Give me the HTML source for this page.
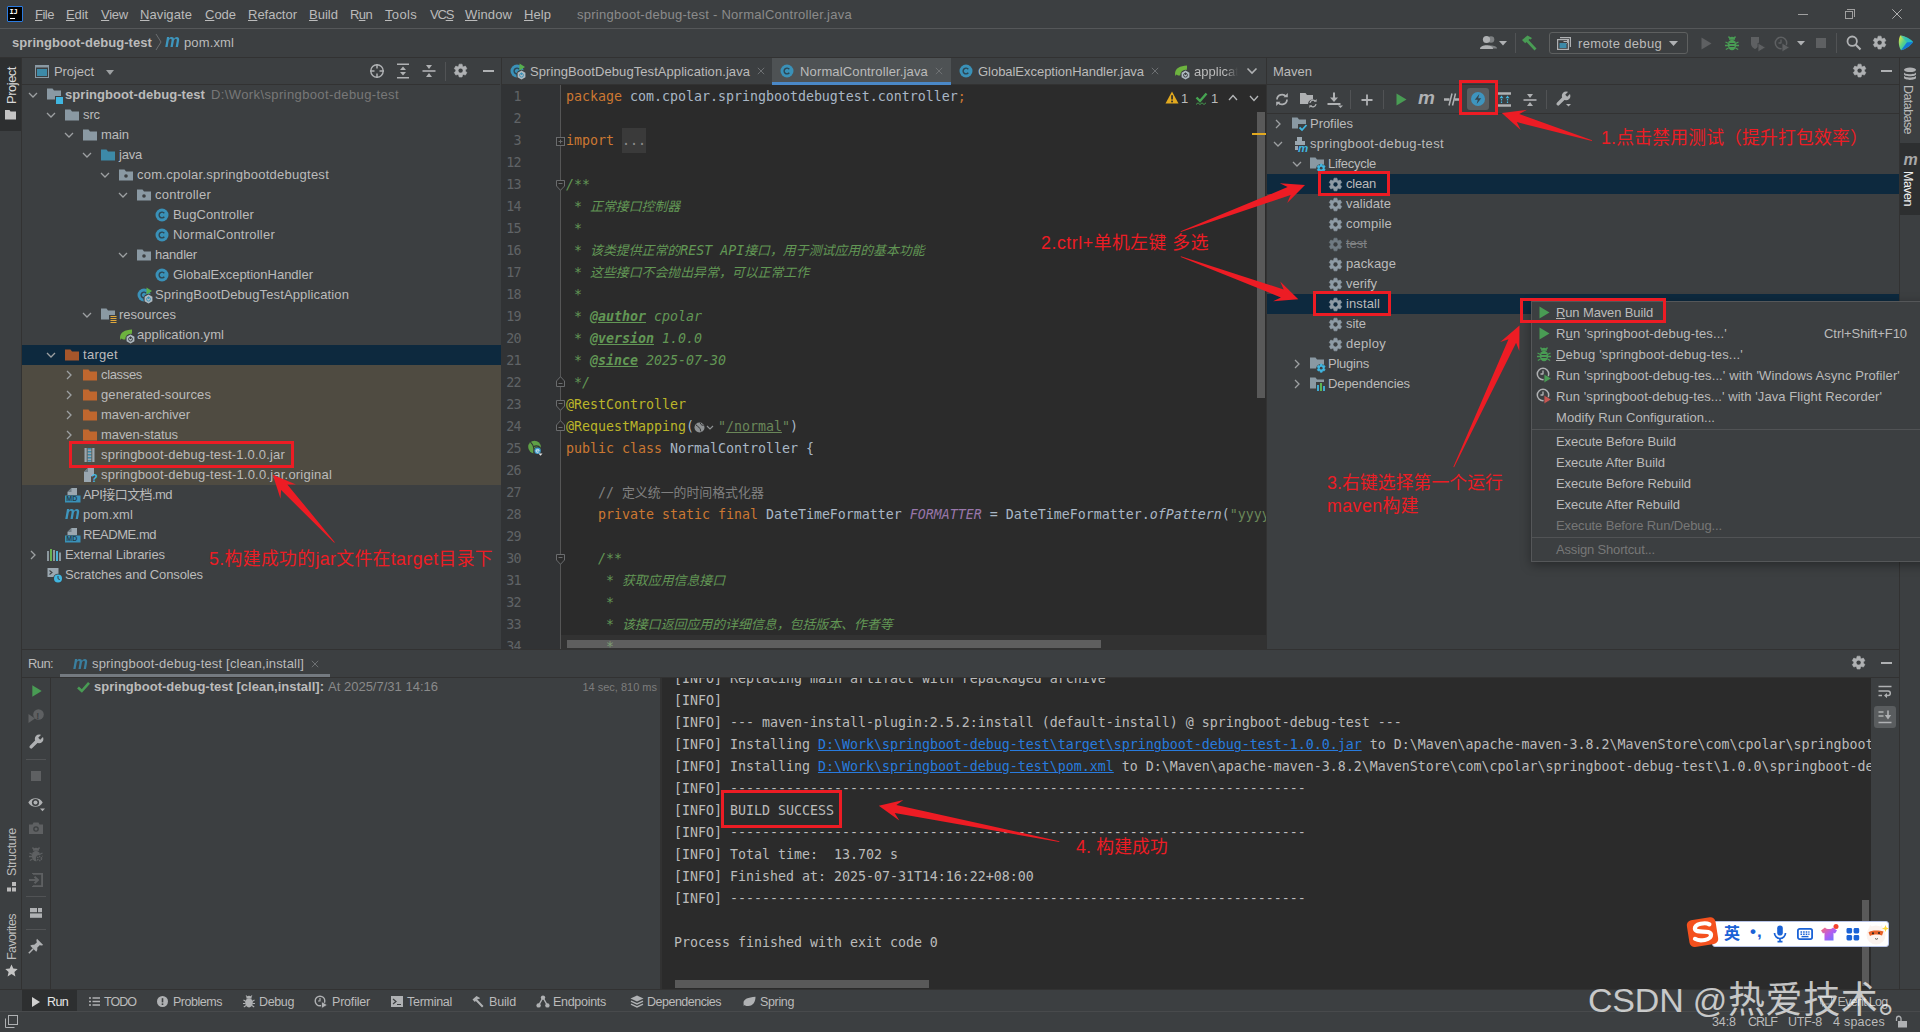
<!DOCTYPE html>
<html lang="zh"><head><meta charset="utf-8"><title>springboot-debug-test - NormalController.java</title>
<style>
html,body{margin:0;padding:0;background:#3c3f41;}
body{width:1920px;height:1032px;position:relative;overflow:hidden;font-family:"Liberation Sans","Noto Sans CJK SC",sans-serif;font-size:13px;color:#bbbbbb;}
#root{position:absolute;left:0;top:0;width:1920px;height:1032px;overflow:hidden;}
#root div,#root svg,#root span.t{position:absolute;}
span.t{white-space:pre;}
u{text-decoration:underline;text-underline-offset:1px;}
</style></head><body><div id="root">
<div style="left:0px;top:0px;width:1920px;height:1032px;background:#3c3f41;"></div>
<div style="left:0px;top:28px;width:1920px;height:1px;background:#555759;"></div>
<div style="left:7px;top:6px;width:16px;height:16px;background:#000000;border:1px solid #2c7be0;box-sizing:border-box;border-radius:1px;"></div>
<span class="t" style="top:8px;line-height:8px;font-size:7px;color:#fff;left:9.5px;font-weight:bold;font-family:'DejaVu Sans Mono','Noto Sans CJK SC',monospace;letter-spacing:-0.3px;">IJ</span>
<div style="left:10px;top:17.5px;width:5px;height:1.2px;background:#fff;"></div>
<span class="t" style="top:5px;line-height:20px;font-size:13px;color:#bbbbbb;left:35px;letter-spacing:-0.492px;"><u>F</u>ile</span>
<span class="t" style="top:5px;line-height:20px;font-size:13px;color:#bbbbbb;left:66px;letter-spacing:-0.102px;"><u>E</u>dit</span>
<span class="t" style="top:5px;line-height:20px;font-size:13px;color:#bbbbbb;left:101px;letter-spacing:-0.238px;"><u>V</u>iew</span>
<span class="t" style="top:5px;line-height:20px;font-size:13px;color:#bbbbbb;left:140px;letter-spacing:0.086px;"><u>N</u>avigate</span>
<span class="t" style="top:5px;line-height:20px;font-size:13px;color:#bbbbbb;left:205px;letter-spacing:-0.023px;"><u>C</u>ode</span>
<span class="t" style="top:5px;line-height:20px;font-size:13px;color:#bbbbbb;left:248px;letter-spacing:-0.018px;"><u>R</u>efactor</span>
<span class="t" style="top:5px;line-height:20px;font-size:13px;color:#bbbbbb;left:309px;letter-spacing:0.016px;"><u>B</u>uild</span>
<span class="t" style="top:5px;line-height:20px;font-size:13px;color:#bbbbbb;left:350px;letter-spacing:-0.620px;">R<u>u</u>n</span>
<span class="t" style="top:5px;line-height:20px;font-size:13px;color:#bbbbbb;left:385px;letter-spacing:0.328px;"><u>T</u>ools</span>
<span class="t" style="top:5px;line-height:20px;font-size:13px;color:#bbbbbb;left:430px;letter-spacing:-1.200px;">VC<u>S</u></span>
<span class="t" style="top:5px;line-height:20px;font-size:13px;color:#bbbbbb;left:465px;letter-spacing:0.125px;"><u>W</u>indow</span>
<span class="t" style="top:5px;line-height:20px;font-size:13px;color:#bbbbbb;left:524px;letter-spacing:0.062px;"><u>H</u>elp</span>
<span class="t" style="top:4.5px;line-height:20px;font-size:13px;color:#8b8b8b;left:577px;letter-spacing:0.266px;">springboot-debug-test - NormalController.java</span>
<div style="left:1798px;top:14px;width:10px;height:1px;background:#a0a0a0;"></div>
<div style="left:1845px;top:11px;width:8px;height:8px;border:1px solid #a0a0a0;box-sizing:border-box;"></div>
<div style="left:1847px;top:9px;width:8px;height:8px;border-top:1px solid #a0a0a0;border-right:1px solid #a0a0a0;box-sizing:border-box;"></div>
<svg style="left:1892px;top:9px;" width="10" height="10" viewBox="0 0 10 10"><path d="M0.3 0.3L9.7 9.7M9.7 0.3L0.3 9.7" stroke="#b0b0b0" stroke-width="1" fill="none"/></svg>
<div style="left:0px;top:57px;width:1920px;height:1px;background:#323232;"></div>
<span class="t" style="top:33px;line-height:20px;font-size:13px;color:#bbbbbb;left:12px;font-weight:bold;letter-spacing:0.064px;">springboot-debug-test</span>
<svg style="left:154px;top:33px;" width="10" height="18" viewBox="0 0 10 18"><path d="M2 1L7 9L2 17" stroke="#6b6e70" stroke-width="1" fill="none"/></svg>
<span class="t" style="top:32.2px;line-height:18px;font-size:19px;color:#3e96be;left:164.5px;font-weight:bold;font-style:italic;transform-origin:0 50%;transform:scaleX(0.88);">m</span>
<span class="t" style="top:33px;line-height:20px;font-size:13px;color:#bbbbbb;left:184px;letter-spacing:0.125px;">pom.xml</span>
<div style="left:0px;top:58px;width:21px;height:954px;background:#3c3f41;"></div>
<div style="left:21px;top:58px;width:1px;height:954px;background:#323232;"></div>
<div style="left:0px;top:58px;width:21px;height:73px;background:#2d2f30;"></div>
<span class="t" style="top:-7px;line-height:14px;font-size:13px;color:#d8d8d8;left:0px;letter-spacing:-0.496px;left:5px;top:67px;transform-origin:0 0;transform:rotate(-90deg) translate(-100%,0);">Project</span>
<svg style="left:5px;top:110px;" width="12" height="10" viewBox="0 0 12 10"><path d="M0 0H4.5L5.5 1.5H11V9.5H0Z" fill="#c4c4c4"/></svg>
<span class="t" style="top:-7px;line-height:14px;font-size:12.5px;color:#bbbbbb;left:0px;letter-spacing:-0.302px;left:5px;top:828px;transform-origin:0 0;transform:rotate(-90deg) translate(-100%,0);">Structure</span>
<svg style="left:7px;top:882px;" width="11" height="10" viewBox="0 0 11 10"><rect x="5" y="0" width="4" height="4" fill="#bbb"/><rect x="0" y="5.5" width="4" height="4" fill="#bbb"/><rect x="5" y="5.5" width="4" height="4" fill="#bbb"/></svg>
<span class="t" style="top:-7px;line-height:14px;font-size:12.5px;color:#bbbbbb;left:0px;letter-spacing:-0.601px;left:5px;top:914px;transform-origin:0 0;transform:rotate(-90deg) translate(-100%,0);">Favorites</span>
<svg style="left:5px;top:964px;" width="13" height="13" viewBox="0 0 13 13"><path d="M6.5 0.5L8.3 4.6L12.7 5L9.4 8L10.4 12.4L6.5 10.1L2.6 12.4L3.6 8L0.3 5L4.7 4.6Z" fill="#c4c4c4"/></svg>
<div style="left:22px;top:84px;width:478px;height:1px;background:#323232;"></div>
<div style="left:501px;top:58px;width:1px;height:592px;background:#323232;"></div>
<svg style="left:35px;top:65px;" width="15" height="14" viewBox="0 0 15 14"><rect x="0.5" y="0.5" width="13" height="12" fill="none" stroke="#8a99a3" stroke-width="1"/><rect x="2" y="4" width="10" height="7" fill="#3d8aa8"/><rect x="0.5" y="0.5" width="13" height="2" fill="#8a99a3"/></svg>
<span class="t" style="top:61.5px;line-height:20px;font-size:13px;color:#bbbbbb;left:54px;letter-spacing:-0.067px;">Project</span>
<svg style="left:106px;top:70px;" width="9" height="6" viewBox="0 0 9 6"><path d="M0 0H8L4 5Z" fill="#9da0a2"/></svg>
<svg style="left:369px;top:63px;" width="16" height="16" viewBox="0 0 16 16"><circle cx="8" cy="8" r="6.2" fill="none" stroke="#afb1b3" stroke-width="1.4"/><path d="M8 1V5.5M8 10.5V15M1 8H5.5M10.5 8H15" stroke="#afb1b3" stroke-width="1.5"/></svg>
<svg style="left:396px;top:63px;" width="14" height="16" viewBox="0 0 14 16"><path d="M1 1.2H13M1 14.8H13" stroke="#afb1b3" stroke-width="1.6"/><path d="M7 3.5L10 7H4ZM7 12.5L10 9H4Z" fill="#afb1b3"/></svg>
<svg style="left:422px;top:63px;" width="14" height="16" viewBox="0 0 14 16"><path d="M0.5 8H13.5" stroke="#afb1b3" stroke-width="1.6"/><path d="M7 6L10 2H4ZM7 10L10 14H4Z" fill="#afb1b3"/></svg>
<div style="left:445px;top:62px;width:1px;height:19px;background:#515355;"></div>
<svg style="left:453.4px;top:63.400000000000006px;" width="15.2" height="15.2" viewBox="0 0 15.2 15.2"><path d="M5.67 3.26L6.12 1.17L9.08 1.17L9.53 3.26L10.39 3.76L12.43 3.10L13.91 5.67L12.33 7.10L12.33 8.10L13.91 9.53L12.43 12.10L10.39 11.44L9.53 11.94L9.08 14.03L6.12 14.03L5.67 11.94L4.81 11.44L2.77 12.10L1.29 9.53L2.87 8.10L2.87 7.10L1.29 5.67L2.77 3.10L4.81 3.76Z" fill="#afb1b3" stroke="#afb1b3" stroke-width="0.6" stroke-linejoin="round"/><circle cx="7.6" cy="7.6" r="2.18" fill="#3c3f41"/></svg>
<div style="left:482.5px;top:70px;width:11px;height:2px;background:#afb1b3;"></div>
<div style="left:22px;top:345px;width:479px;height:20px;background:#0d293e;"></div>
<div style="left:22px;top:365px;width:479px;height:120px;background:#4f4b41;"></div>
<svg style="left:28px;top:90.5px;" width="10" height="8" viewBox="0 0 10 8"><path d="M1 2L5 6L9 2" stroke="#9da0a2" stroke-width="1.3" fill="none"/></svg>
<svg style="left:47px;top:87.5px;" width="15" height="12" viewBox="0 0 15 12"><path d="M0 0.5H5.5L7 2.5H14V11.5H0Z" fill="#8a99a3"/></svg>
<div style="left:55px;top:95.5px;width:7px;height:7px;background:#40b6e0;border:1px solid #3c3f41;"></div>
<span class="t" style="top:84.5px;line-height:20px;font-size:13px;color:#bbbbbb;left:65px;font-weight:bold;letter-spacing:0.064px;">springboot-debug-test</span>
<svg style="left:46px;top:110.5px;" width="10" height="8" viewBox="0 0 10 8"><path d="M1 2L5 6L9 2" stroke="#9da0a2" stroke-width="1.3" fill="none"/></svg>
<svg style="left:65px;top:108.5px;" width="15" height="12" viewBox="0 0 15 12"><path d="M0 0.5H5.5L7 2.5H14V11.5H0Z" fill="#8a99a3"/></svg>
<span class="t" style="top:104.5px;line-height:20px;font-size:13px;color:#bbbbbb;left:83px;letter-spacing:-0.115px;">src</span>
<svg style="left:64px;top:130.5px;" width="10" height="8" viewBox="0 0 10 8"><path d="M1 2L5 6L9 2" stroke="#9da0a2" stroke-width="1.3" fill="none"/></svg>
<svg style="left:83px;top:128.5px;" width="15" height="12" viewBox="0 0 15 12"><path d="M0 0.5H5.5L7 2.5H14V11.5H0Z" fill="#8a99a3"/></svg>
<span class="t" style="top:124.5px;line-height:20px;font-size:13px;color:#bbbbbb;left:101px;letter-spacing:-0.047px;">main</span>
<svg style="left:82px;top:150.5px;" width="10" height="8" viewBox="0 0 10 8"><path d="M1 2L5 6L9 2" stroke="#9da0a2" stroke-width="1.3" fill="none"/></svg>
<svg style="left:101px;top:148.5px;" width="15" height="12" viewBox="0 0 15 12"><path d="M0 0.5H5.5L7 2.5H14V11.5H0Z" fill="#3d8aa8"/></svg>
<span class="t" style="top:144.5px;line-height:20px;font-size:13px;color:#bbbbbb;left:119px;letter-spacing:-0.215px;">java</span>
<svg style="left:100px;top:170.5px;" width="10" height="8" viewBox="0 0 10 8"><path d="M1 2L5 6L9 2" stroke="#9da0a2" stroke-width="1.3" fill="none"/></svg>
<svg style="left:119px;top:168.5px;" width="15" height="12" viewBox="0 0 15 12"><path d="M0 0.5H5.5L7 2.5H14V11.5H0Z" fill="#8a99a3"/><circle cx="7" cy="7" r="1.8" fill="#3c3f41"/></svg>
<span class="t" style="top:164.5px;line-height:20px;font-size:13px;color:#bbbbbb;left:137px;letter-spacing:0.257px;">com.cpolar.springbootdebugtest</span>
<svg style="left:118px;top:190.5px;" width="10" height="8" viewBox="0 0 10 8"><path d="M1 2L5 6L9 2" stroke="#9da0a2" stroke-width="1.3" fill="none"/></svg>
<svg style="left:137px;top:188.5px;" width="15" height="12" viewBox="0 0 15 12"><path d="M0 0.5H5.5L7 2.5H14V11.5H0Z" fill="#8a99a3"/><circle cx="7" cy="7" r="1.8" fill="#3c3f41"/></svg>
<span class="t" style="top:184.5px;line-height:20px;font-size:13px;color:#bbbbbb;left:155px;letter-spacing:0.253px;">controller</span>
<svg style="left:155px;top:207.5px;" width="14" height="14" viewBox="0 0 14 14"><circle cx="7" cy="7" r="6.5" fill="#3a91b8"/><path d="M9.3 5.2A2.9 2.9 0 1 0 9.3 8.8" stroke="#2d4552" stroke-width="1.4" fill="none"/></svg>
<span class="t" style="top:204.5px;line-height:20px;font-size:13px;color:#bbbbbb;left:173px;letter-spacing:0.115px;">BugController</span>
<svg style="left:155px;top:227.5px;" width="14" height="14" viewBox="0 0 14 14"><circle cx="7" cy="7" r="6.5" fill="#3a91b8"/><path d="M9.3 5.2A2.9 2.9 0 1 0 9.3 8.8" stroke="#2d4552" stroke-width="1.4" fill="none"/></svg>
<span class="t" style="top:224.5px;line-height:20px;font-size:13px;color:#bbbbbb;left:173px;letter-spacing:0.234px;">NormalController</span>
<svg style="left:118px;top:250.5px;" width="10" height="8" viewBox="0 0 10 8"><path d="M1 2L5 6L9 2" stroke="#9da0a2" stroke-width="1.3" fill="none"/></svg>
<svg style="left:137px;top:248.5px;" width="15" height="12" viewBox="0 0 15 12"><path d="M0 0.5H5.5L7 2.5H14V11.5H0Z" fill="#8a99a3"/><circle cx="7" cy="7" r="1.8" fill="#3c3f41"/></svg>
<span class="t" style="top:244.5px;line-height:20px;font-size:13px;color:#bbbbbb;left:155px;letter-spacing:-0.196px;">handler</span>
<svg style="left:155px;top:267.5px;" width="14" height="14" viewBox="0 0 14 14"><circle cx="7" cy="7" r="6.5" fill="#3a91b8"/><path d="M9.3 5.2A2.9 2.9 0 1 0 9.3 8.8" stroke="#2d4552" stroke-width="1.4" fill="none"/></svg>
<span class="t" style="top:264.5px;line-height:20px;font-size:13px;color:#bbbbbb;left:173px;letter-spacing:-0.009px;">GlobalExceptionHandler</span>
<svg style="left:137px;top:286.5px;" width="17" height="17" viewBox="0 0 17 17"><circle cx="7" cy="8" r="6.5" fill="#3a91b8"/><path d="M9.3 6.2A2.9 2.9 0 1 0 9.3 9.8" stroke="#2d4552" stroke-width="1.4" fill="none"/><path d="M9.5 0.5L15 4L9.5 7.5Z" fill="#57b04f"/><circle cx="11.5" cy="12" r="5.2" fill="#3c3f41"/><path d="M11.5 7.5L15.4 9.7V14.3L11.5 16.5L7.6 14.3V9.7Z" fill="#aeb9c0"/><circle cx="11.5" cy="12.2" r="1.9" fill="none" stroke="#3a91b8" stroke-width="1"/><path d="M11.5 9.6V12" stroke="#3a91b8" stroke-width="1"/></svg>
<span class="t" style="top:284.5px;line-height:20px;font-size:13px;color:#bbbbbb;left:155px;letter-spacing:0.131px;">SpringBootDebugTestApplication</span>
<svg style="left:82px;top:310.5px;" width="10" height="8" viewBox="0 0 10 8"><path d="M1 2L5 6L9 2" stroke="#9da0a2" stroke-width="1.3" fill="none"/></svg>
<svg style="left:101px;top:307.5px;" width="15" height="12" viewBox="0 0 15 12"><path d="M0 0.5H5.5L7 2.5H14V11.5H0Z" fill="#8a99a3"/></svg>
<svg style="left:109px;top:314.5px;" width="8" height="8" viewBox="0 0 8 8"><rect x="0" y="0" width="8" height="8" fill="#3c3f41"/><path d="M1.5 1.5H7.5M1.5 3.5H7.5M1.5 5.5H7.5M1.5 7.5H7.5" stroke="#e0a83c" stroke-width="1"/></svg>
<span class="t" style="top:304.5px;line-height:20px;font-size:13px;color:#bbbbbb;left:119px;letter-spacing:-0.009px;">resources</span>
<svg style="left:119px;top:326.5px;" width="17" height="17" viewBox="0 0 17 17"><path d="M1 11C1 5 6 3 13 2.5C13.5 8 11 13 5 12.5C4 12.5 3 12 2.5 11.5L1.5 13Z" fill="#6db33f"/><circle cx="11.5" cy="12" r="5.2" fill="#3c3f41"/><path d="M11.5 7.5L15.4 9.7V14.3L11.5 16.5L7.6 14.3V9.7Z" fill="#aeb9c0"/><circle cx="11.5" cy="12.2" r="1.9" fill="none" stroke="#3c3f41" stroke-width="1"/><path d="M11.5 9.6V12" stroke="#3c3f41" stroke-width="1"/></svg>
<span class="t" style="top:324.5px;line-height:20px;font-size:13px;color:#bbbbbb;left:137px;letter-spacing:0.067px;">application.yml</span>
<svg style="left:46px;top:350.5px;" width="10" height="8" viewBox="0 0 10 8"><path d="M1 2L5 6L9 2" stroke="#9da0a2" stroke-width="1.3" fill="none"/></svg>
<svg style="left:65px;top:348.5px;" width="15" height="12" viewBox="0 0 15 12"><path d="M0 0.5H5.5L7 2.5H14V11.5H0Z" fill="#a5562b"/></svg>
<span class="t" style="top:344.5px;line-height:20px;font-size:13px;color:#bbbbbb;left:83px;letter-spacing:0.292px;">target</span>
<svg style="left:65px;top:369.5px;" width="8" height="10" viewBox="0 0 8 10"><path d="M2 1L6 5L2 9" stroke="#9da0a2" stroke-width="1.3" fill="none"/></svg>
<svg style="left:83px;top:368.5px;" width="15" height="12" viewBox="0 0 15 12"><path d="M0 0.5H5.5L7 2.5H14V11.5H0Z" fill="#c0672e"/></svg>
<span class="t" style="top:364.5px;line-height:20px;font-size:13px;color:#bbbbbb;left:101px;letter-spacing:-0.337px;">classes</span>
<svg style="left:65px;top:389.5px;" width="8" height="10" viewBox="0 0 8 10"><path d="M2 1L6 5L2 9" stroke="#9da0a2" stroke-width="1.3" fill="none"/></svg>
<svg style="left:83px;top:388.5px;" width="15" height="12" viewBox="0 0 15 12"><path d="M0 0.5H5.5L7 2.5H14V11.5H0Z" fill="#c0672e"/></svg>
<span class="t" style="top:384.5px;line-height:20px;font-size:13px;color:#bbbbbb;left:101px;letter-spacing:0.094px;">generated-sources</span>
<svg style="left:65px;top:409.5px;" width="8" height="10" viewBox="0 0 8 10"><path d="M2 1L6 5L2 9" stroke="#9da0a2" stroke-width="1.3" fill="none"/></svg>
<svg style="left:83px;top:408.5px;" width="15" height="12" viewBox="0 0 15 12"><path d="M0 0.5H5.5L7 2.5H14V11.5H0Z" fill="#c0672e"/></svg>
<span class="t" style="top:404.5px;line-height:20px;font-size:13px;color:#bbbbbb;left:101px;letter-spacing:-0.042px;">maven-archiver</span>
<svg style="left:65px;top:429.5px;" width="8" height="10" viewBox="0 0 8 10"><path d="M2 1L6 5L2 9" stroke="#9da0a2" stroke-width="1.3" fill="none"/></svg>
<svg style="left:83px;top:428.5px;" width="15" height="12" viewBox="0 0 15 12"><path d="M0 0.5H5.5L7 2.5H14V11.5H0Z" fill="#c0672e"/></svg>
<span class="t" style="top:424.5px;line-height:20px;font-size:13px;color:#bbbbbb;left:101px;letter-spacing:-0.087px;">maven-status</span>
<svg style="left:83px;top:447.5px;" width="13" height="14" viewBox="0 0 13 14"><rect x="1.5" y="0" width="10" height="14" fill="#9aa7b0"/><path d="M6.5 0V14" stroke="#3d8aa8" stroke-width="4" stroke-dasharray="1.5 1.5"/><path d="M4.2 0V14M8.8 0V14" stroke="#4f4b41" stroke-width="0.8"/></svg>
<span class="t" style="top:444.5px;line-height:20px;font-size:13px;color:#bbbbbb;left:101px;letter-spacing:0.201px;">springboot-debug-test-1.0.0.jar</span>
<svg style="left:83px;top:466.5px;" width="16" height="16" viewBox="0 0 16 16"><path d="M5 1H11V9H8V15H1V5Z" fill="#9aa7b0"/><path d="M1 5H5V1Z" fill="#6f7d86"/></svg>
<span class="t" style="top:471.5px;line-height:12px;font-size:11px;color:#40b6e0;left:91px;font-weight:bold;">?</span>
<span class="t" style="top:464.5px;line-height:20px;font-size:13px;color:#bbbbbb;left:101px;letter-spacing:0.210px;">springboot-debug-test-1.0.0.jar.original</span>
<svg style="left:65px;top:486.5px;" width="16" height="16" viewBox="0 0 16 16"><path d="M6.5 1H12V8H2.5V5Z" fill="#9aa7b0"/><path d="M2.5 5H6.5V1Z" fill="#6f7d86"/><rect x="0" y="8.5" width="15.5" height="7" fill="#3a91b8"/></svg>
<span class="t" style="top:495.3px;line-height:7px;font-size:7px;color:#24404f;left:66.2px;font-weight:bold;letter-spacing:0.3px;">MD</span>
<span class="t" style="top:484.5px;line-height:20px;font-size:13px;color:#bbbbbb;left:83px;letter-spacing:-0.562px;">API接口文档.md</span>
<span class="t" style="top:504.2px;line-height:18px;font-size:19px;color:#3e96be;left:64.5px;font-weight:bold;font-style:italic;transform-origin:0 50%;transform:scaleX(0.88);">m</span>
<span class="t" style="top:504.5px;line-height:20px;font-size:13px;color:#bbbbbb;left:83px;letter-spacing:0.125px;">pom.xml</span>
<svg style="left:65px;top:526.5px;" width="16" height="16" viewBox="0 0 16 16"><path d="M6.5 1H12V8H2.5V5Z" fill="#9aa7b0"/><path d="M2.5 5H6.5V1Z" fill="#6f7d86"/><rect x="0" y="8.5" width="15.5" height="7" fill="#3a91b8"/></svg>
<span class="t" style="top:535.3px;line-height:7px;font-size:7px;color:#24404f;left:66.2px;font-weight:bold;letter-spacing:0.3px;">MD</span>
<span class="t" style="top:524.5px;line-height:20px;font-size:13px;color:#bbbbbb;left:83px;letter-spacing:-0.477px;">README.md</span>
<svg style="left:29px;top:549.5px;" width="8" height="10" viewBox="0 0 8 10"><path d="M2 1L6 5L2 9" stroke="#9da0a2" stroke-width="1.3" fill="none"/></svg>
<svg style="left:47px;top:548.5px;" width="15" height="12" viewBox="0 0 15 12"><path d="M1 2V12M4 0V12M7 1V12M10 2V12M13 3.5V12" stroke="#9aa7b0" stroke-width="1.7"/><path d="M4 0V12" stroke="#62b543" stroke-width="1.7"/><path d="M10 2V12" stroke="#40b6e0" stroke-width="1.7"/></svg>
<span class="t" style="top:544.5px;line-height:20px;font-size:13px;color:#bbbbbb;left:65px;letter-spacing:-0.064px;">External Libraries</span>
<svg style="left:47px;top:566.5px;" width="17" height="17" viewBox="0 0 17 17"><rect x="0.5" y="1" width="11" height="9" fill="#9aa7b0"/><path d="M2.5 3.5L5 5.5L2.5 7.5" stroke="#3c3f41" stroke-width="1.1" fill="none"/><circle cx="11" cy="11.5" r="4.8" fill="#3c3f41"/><circle cx="11" cy="11.5" r="4" fill="#40b6e0"/><path d="M11 9V11.7L12.8 12.6" stroke="#3c3f41" stroke-width="1" fill="none"/></svg>
<span class="t" style="top:564.5px;line-height:20px;font-size:13px;color:#bbbbbb;left:65px;letter-spacing:-0.133px;">Scratches and Consoles</span>
<span class="t" style="top:84.5px;line-height:20px;font-size:13px;color:#787878;left:211px;letter-spacing:0.386px;">D:\Work\springboot-debug-test</span>
<div style="left:501px;top:84px;width:766px;height:1px;background:#323232;"></div>
<div style="left:772px;top:58px;width:179px;height:27px;background:#4e5254;"></div>
<div style="left:772px;top:82px;width:179px;height:3px;background:#4a88c7;"></div>
<svg style="left:510px;top:63px;" width="17" height="17" viewBox="0 0 17 17"><circle cx="7" cy="8" r="6.5" fill="#3a91b8"/><path d="M9.3 6.2A2.9 2.9 0 1 0 9.3 9.8" stroke="#2d4552" stroke-width="1.4" fill="none"/><path d="M9.5 0.5L15 4L9.5 7.5Z" fill="#57b04f"/><circle cx="11.5" cy="12" r="5.2" fill="#3c3f41"/><path d="M11.5 7.5L15.4 9.7V14.3L11.5 16.5L7.6 14.3V9.7Z" fill="#aeb9c0"/><circle cx="11.5" cy="12.2" r="1.9" fill="none" stroke="#3a91b8" stroke-width="1"/><path d="M11.5 9.6V12" stroke="#3a91b8" stroke-width="1"/></svg>
<span class="t" style="top:61.5px;line-height:20px;font-size:13px;color:#bbbbbb;left:530px;letter-spacing:0.071px;">SpringBootDebugTestApplication.java</span>
<svg style="left:757px;top:67px;" width="8" height="8" viewBox="0 0 8 8"><path d="M0.8 0.8L7.2 7.2M7.2 0.8L0.8 7.2" stroke="#6e7173" stroke-width="1" fill="none"/></svg>
<svg style="left:780px;top:64px;" width="14" height="14" viewBox="0 0 14 14"><circle cx="7" cy="7" r="6.5" fill="#3a91b8"/><path d="M9.3 5.2A2.9 2.9 0 1 0 9.3 8.8" stroke="#2d4552" stroke-width="1.4" fill="none"/></svg>
<span class="t" style="top:61.5px;line-height:20px;font-size:13px;color:#bbbbbb;left:800px;letter-spacing:0.143px;">NormalController.java</span>
<svg style="left:935px;top:67px;" width="8" height="8" viewBox="0 0 8 8"><path d="M0.8 0.8L7.2 7.2M7.2 0.8L0.8 7.2" stroke="#6e7173" stroke-width="1" fill="none"/></svg>
<svg style="left:959px;top:64px;" width="14" height="14" viewBox="0 0 14 14"><circle cx="7" cy="7" r="6.5" fill="#3a91b8"/><path d="M9.3 5.2A2.9 2.9 0 1 0 9.3 8.8" stroke="#2d4552" stroke-width="1.4" fill="none"/></svg>
<span class="t" style="top:61.5px;line-height:20px;font-size:13px;color:#bbbbbb;left:978px;letter-spacing:-0.035px;">GlobalExceptionHandler.java</span>
<svg style="left:1151px;top:67px;" width="8" height="8" viewBox="0 0 8 8"><path d="M0.8 0.8L7.2 7.2M7.2 0.8L0.8 7.2" stroke="#6e7173" stroke-width="1" fill="none"/></svg>
<svg style="left:1174px;top:63px;" width="17" height="17" viewBox="0 0 17 17"><path d="M1 11C1 5 6 3 13 2.5C13.5 8 11 13 5 12.5C4 12.5 3 12 2.5 11.5L1.5 13Z" fill="#6db33f"/><circle cx="11.5" cy="12" r="5.2" fill="#3c3f41"/><path d="M11.5 7.5L15.4 9.7V14.3L11.5 16.5L7.6 14.3V9.7Z" fill="#aeb9c0"/><circle cx="11.5" cy="12.2" r="1.9" fill="none" stroke="#3c3f41" stroke-width="1"/><path d="M11.5 9.6V12" stroke="#3c3f41" stroke-width="1"/></svg>
<span class="t" style="top:61.5px;line-height:20px;font-size:13px;color:#bbbbbb;left:1194px;letter-spacing:0.023px;-webkit-mask-image:linear-gradient(90deg,#000 70%,transparent 98%);mask-image:linear-gradient(90deg,#000 70%,transparent 98%);">applicat</span>
<svg style="left:1246px;top:67px;" width="12" height="8" viewBox="0 0 12 8"><path d="M1.5 1.5L6 6L10.5 1.5" stroke="#afb1b3" stroke-width="1.6" fill="none"/></svg>
<div style="left:501px;top:85px;width:766px;height:565px;background:#2b2b2b;"></div>
<div style="left:501px;top:85px;width:59px;height:565px;background:#313335;"></div>
<div style="left:560px;top:85px;width:1px;height:565px;background:#555555;"></div>
<div style="left:561px;top:635px;width:705px;height:14px;background:#323232;"></div>
<div style="left:566px;top:86px;width:700px;height:563px;overflow:hidden;font-family:'DejaVu Sans Mono','Noto Sans CJK SC',monospace;font-size:13.29px;"><span class="t" style="left:0;top:0px;line-height:22px;"><span style="color:#cc7832;">package </span><span style="color:#a9b7c6;">com.cpolar.springbootdebugtest.controller</span><span style="color:#cc7832;">;</span></span><span class="t" style="left:0;top:22px;line-height:22px;"></span><span class="t" style="left:0;top:44px;line-height:22px;"><span style="color:#cc7832;">import </span><span style="color:#8c8c8c;background:#3a3a3a;padding:5px 0 5px 0;">...</span></span><span class="t" style="left:0;top:66px;line-height:22px;"></span><span class="t" style="left:0;top:88px;line-height:22px;"><span style="color:#629755;font-style:italic;">/**</span></span><span class="t" style="left:0;top:110px;line-height:22px;"><span style="color:#629755;font-style:italic;"> * <span style="font-size:12.9px;">正常接口控制器</span></span></span><span class="t" style="left:0;top:132px;line-height:22px;"><span style="color:#629755;font-style:italic;"> *</span></span><span class="t" style="left:0;top:154px;line-height:22px;"><span style="color:#629755;font-style:italic;"> * <span style="font-size:12.9px;">该类提供正常的</span>REST API<span style="font-size:12.9px;">接口，用于测试应用的基本功能</span></span></span><span class="t" style="left:0;top:176px;line-height:22px;"><span style="color:#629755;font-style:italic;"> * <span style="font-size:12.9px;">这些接口不会抛出异常，可以正常工作</span></span></span><span class="t" style="left:0;top:198px;line-height:22px;"><span style="color:#629755;font-style:italic;"> *</span></span><span class="t" style="left:0;top:220px;line-height:22px;"><span style="color:#629755;font-style:italic;"> * </span><span style="color:#629755;font-weight:bold;font-style:italic;text-decoration:underline;">@author</span><span style="color:#629755;font-style:italic;"> cpolar</span></span><span class="t" style="left:0;top:242px;line-height:22px;"><span style="color:#629755;font-style:italic;"> * </span><span style="color:#629755;font-weight:bold;font-style:italic;text-decoration:underline;">@version</span><span style="color:#629755;font-style:italic;"> 1.0.0</span></span><span class="t" style="left:0;top:264px;line-height:22px;"><span style="color:#629755;font-style:italic;"> * </span><span style="color:#629755;font-weight:bold;font-style:italic;text-decoration:underline;">@since</span><span style="color:#629755;font-style:italic;"> 2025-07-30</span></span><span class="t" style="left:0;top:286px;line-height:22px;"><span style="color:#629755;font-style:italic;"> */</span></span><span class="t" style="left:0;top:308px;line-height:22px;"><span style="color:#bbb529;">@RestController</span></span><span class="t" style="left:0;top:330px;line-height:22px;"><span style="color:#bbb529;">@RequestMapping</span><span style="color:#a9b7c6;">(</span><span style="display:inline-block;width:24px;"></span><span style="color:#6a8759;">"</span><span style="color:#6a8759;text-decoration:underline;">/normal</span><span style="color:#6a8759;">"</span><span style="color:#a9b7c6;">)</span></span><span class="t" style="left:0;top:352px;line-height:22px;"><span style="color:#cc7832;">public class </span><span style="color:#a9b7c6;">NormalController {</span></span><span class="t" style="left:0;top:374px;line-height:22px;"></span><span class="t" style="left:0;top:396px;line-height:22px;"><span style="color:#808080;">    // <span style="font-size:12.9px;">定义统一的时间格式化器</span></span></span><span class="t" style="left:0;top:418px;line-height:22px;"><span style="color:#cc7832;">    private static final </span><span style="color:#a9b7c6;">DateTimeFormatter </span><span style="color:#9876aa;font-style:italic;">FORMATTER</span><span style="color:#a9b7c6;"> = DateTimeFormatter.</span><span style="color:#a9b7c6;font-style:italic;">ofPattern</span><span style="color:#a9b7c6;">(</span><span style="color:#6a8759;">"yyyy-MM-dd HH:mm:ss"</span></span><span class="t" style="left:0;top:440px;line-height:22px;"></span><span class="t" style="left:0;top:462px;line-height:22px;"><span style="color:#629755;font-style:italic;">    /**</span></span><span class="t" style="left:0;top:484px;line-height:22px;"><span style="color:#629755;font-style:italic;">     * <span style="font-size:12.9px;">获取应用信息接口</span></span></span><span class="t" style="left:0;top:506px;line-height:22px;"><span style="color:#629755;font-style:italic;">     *</span></span><span class="t" style="left:0;top:528px;line-height:22px;"><span style="color:#629755;font-style:italic;">     * <span style="font-size:12.9px;">该接口返回应用的详细信息，包括版本、作者等</span></span></span><span class="t" style="left:0;top:550px;line-height:22px;"><span style="color:#629755;font-style:italic;">     *</span></span></div>
<span class="t" style="top:86.3px;line-height:22px;font-size:13.333px;color:#606366;right:1399px;font-family:'DejaVu Sans Mono','Noto Sans CJK SC',monospace;letter-spacing:-0.6px;">1</span>
<span class="t" style="top:108.3px;line-height:22px;font-size:13.333px;color:#606366;right:1399px;font-family:'DejaVu Sans Mono','Noto Sans CJK SC',monospace;letter-spacing:-0.6px;">2</span>
<span class="t" style="top:130.3px;line-height:22px;font-size:13.333px;color:#606366;right:1399px;font-family:'DejaVu Sans Mono','Noto Sans CJK SC',monospace;letter-spacing:-0.6px;">3</span>
<span class="t" style="top:152.3px;line-height:22px;font-size:13.333px;color:#606366;right:1399px;font-family:'DejaVu Sans Mono','Noto Sans CJK SC',monospace;letter-spacing:-0.6px;">12</span>
<span class="t" style="top:174.3px;line-height:22px;font-size:13.333px;color:#606366;right:1399px;font-family:'DejaVu Sans Mono','Noto Sans CJK SC',monospace;letter-spacing:-0.6px;">13</span>
<span class="t" style="top:196.3px;line-height:22px;font-size:13.333px;color:#606366;right:1399px;font-family:'DejaVu Sans Mono','Noto Sans CJK SC',monospace;letter-spacing:-0.6px;">14</span>
<span class="t" style="top:218.3px;line-height:22px;font-size:13.333px;color:#606366;right:1399px;font-family:'DejaVu Sans Mono','Noto Sans CJK SC',monospace;letter-spacing:-0.6px;">15</span>
<span class="t" style="top:240.3px;line-height:22px;font-size:13.333px;color:#606366;right:1399px;font-family:'DejaVu Sans Mono','Noto Sans CJK SC',monospace;letter-spacing:-0.6px;">16</span>
<span class="t" style="top:262.3px;line-height:22px;font-size:13.333px;color:#606366;right:1399px;font-family:'DejaVu Sans Mono','Noto Sans CJK SC',monospace;letter-spacing:-0.6px;">17</span>
<span class="t" style="top:284.3px;line-height:22px;font-size:13.333px;color:#606366;right:1399px;font-family:'DejaVu Sans Mono','Noto Sans CJK SC',monospace;letter-spacing:-0.6px;">18</span>
<span class="t" style="top:306.3px;line-height:22px;font-size:13.333px;color:#606366;right:1399px;font-family:'DejaVu Sans Mono','Noto Sans CJK SC',monospace;letter-spacing:-0.6px;">19</span>
<span class="t" style="top:328.3px;line-height:22px;font-size:13.333px;color:#606366;right:1399px;font-family:'DejaVu Sans Mono','Noto Sans CJK SC',monospace;letter-spacing:-0.6px;">20</span>
<span class="t" style="top:350.3px;line-height:22px;font-size:13.333px;color:#606366;right:1399px;font-family:'DejaVu Sans Mono','Noto Sans CJK SC',monospace;letter-spacing:-0.6px;">21</span>
<span class="t" style="top:372.3px;line-height:22px;font-size:13.333px;color:#606366;right:1399px;font-family:'DejaVu Sans Mono','Noto Sans CJK SC',monospace;letter-spacing:-0.6px;">22</span>
<span class="t" style="top:394.3px;line-height:22px;font-size:13.333px;color:#606366;right:1399px;font-family:'DejaVu Sans Mono','Noto Sans CJK SC',monospace;letter-spacing:-0.6px;">23</span>
<span class="t" style="top:416.3px;line-height:22px;font-size:13.333px;color:#606366;right:1399px;font-family:'DejaVu Sans Mono','Noto Sans CJK SC',monospace;letter-spacing:-0.6px;">24</span>
<span class="t" style="top:438.3px;line-height:22px;font-size:13.333px;color:#606366;right:1399px;font-family:'DejaVu Sans Mono','Noto Sans CJK SC',monospace;letter-spacing:-0.6px;">25</span>
<span class="t" style="top:460.3px;line-height:22px;font-size:13.333px;color:#606366;right:1399px;font-family:'DejaVu Sans Mono','Noto Sans CJK SC',monospace;letter-spacing:-0.6px;">26</span>
<span class="t" style="top:482.3px;line-height:22px;font-size:13.333px;color:#606366;right:1399px;font-family:'DejaVu Sans Mono','Noto Sans CJK SC',monospace;letter-spacing:-0.6px;">27</span>
<span class="t" style="top:504.3px;line-height:22px;font-size:13.333px;color:#606366;right:1399px;font-family:'DejaVu Sans Mono','Noto Sans CJK SC',monospace;letter-spacing:-0.6px;">28</span>
<span class="t" style="top:526.3px;line-height:22px;font-size:13.333px;color:#606366;right:1399px;font-family:'DejaVu Sans Mono','Noto Sans CJK SC',monospace;letter-spacing:-0.6px;">29</span>
<span class="t" style="top:548.3px;line-height:22px;font-size:13.333px;color:#606366;right:1399px;font-family:'DejaVu Sans Mono','Noto Sans CJK SC',monospace;letter-spacing:-0.6px;">30</span>
<span class="t" style="top:570.3px;line-height:22px;font-size:13.333px;color:#606366;right:1399px;font-family:'DejaVu Sans Mono','Noto Sans CJK SC',monospace;letter-spacing:-0.6px;">31</span>
<span class="t" style="top:592.3px;line-height:22px;font-size:13.333px;color:#606366;right:1399px;font-family:'DejaVu Sans Mono','Noto Sans CJK SC',monospace;letter-spacing:-0.6px;">32</span>
<span class="t" style="top:614.3px;line-height:22px;font-size:13.333px;color:#606366;right:1399px;font-family:'DejaVu Sans Mono','Noto Sans CJK SC',monospace;letter-spacing:-0.6px;">33</span>
<span class="t" style="top:636.3px;line-height:22px;font-size:13.333px;color:#606366;right:1399px;font-family:'DejaVu Sans Mono','Noto Sans CJK SC',monospace;letter-spacing:-0.6px;">34</span>
<div style="left:567px;top:640px;width:534px;height:8px;background:rgba(166,166,166,0.38);"></div>
<div style="left:22px;top:649px;width:1878px;height:28px;background:#3c3f41;"></div>
<svg style="left:556px;top:137px;" width="9" height="9" viewBox="0 0 9 9"><rect x="0.5" y="0.5" width="8" height="8" fill="#2b2b2b" stroke="#6a6c6e" stroke-width="1"/><path d="M2.5 4.5H6.5M4.5 2.5V6.5" stroke="#6a6c6e" stroke-width="1"/></svg>
<svg style="left:556px;top:180px;" width="9" height="11" viewBox="0 0 9 11"><path d="M0.5 0.5H8.5V6L4.5 10.3L0.5 6Z" fill="#2b2b2b" stroke="#6a6c6e" stroke-width="1"/><path d="M2.5 3.5H6.5" stroke="#6a6c6e" stroke-width="1"/></svg>
<svg style="left:556px;top:376px;" width="9" height="11" viewBox="0 0 9 11"><path d="M0.5 10.5H8.5V5L4.5 0.7L0.5 5Z" fill="#2b2b2b" stroke="#6a6c6e" stroke-width="1"/><path d="M2.5 7.5H6.5" stroke="#6a6c6e" stroke-width="1"/></svg>
<svg style="left:556px;top:400px;" width="9" height="11" viewBox="0 0 9 11"><path d="M0.5 0.5H8.5V6L4.5 10.3L0.5 6Z" fill="#2b2b2b" stroke="#6a6c6e" stroke-width="1"/><path d="M2.5 3.5H6.5" stroke="#6a6c6e" stroke-width="1"/></svg>
<svg style="left:556px;top:420px;" width="9" height="11" viewBox="0 0 9 11"><path d="M0.5 10.5H8.5V5L4.5 0.7L0.5 5Z" fill="#2b2b2b" stroke="#6a6c6e" stroke-width="1"/><path d="M2.5 7.5H6.5" stroke="#6a6c6e" stroke-width="1"/></svg>
<svg style="left:556px;top:554px;" width="9" height="11" viewBox="0 0 9 11"><path d="M0.5 0.5H8.5V6L4.5 10.3L0.5 6Z" fill="#2b2b2b" stroke="#6a6c6e" stroke-width="1"/><path d="M2.5 3.5H6.5" stroke="#6a6c6e" stroke-width="1"/></svg>
<svg style="left:528px;top:440px;" width="15" height="17" viewBox="0 0 15 17"><circle cx="6.5" cy="7" r="6.3" fill="#5fa046"/><path d="M2.5 2.2C5 4.5 6.5 8 5.8 13" stroke="#313335" stroke-width="1.1" fill="none"/><path d="M5.5 6.5C8 5.5 11 6 12.5 8" stroke="#313335" stroke-width="1.1" fill="none"/><circle cx="9.6" cy="10.8" r="3.9" fill="#313335"/><circle cx="9.6" cy="10.8" r="3.2" fill="#3d9ccc"/><path d="M8 10.9H11.2A1.6 1.6 0 1 0 10.6 12.2" stroke="#dfe9ee" stroke-width="0.9" fill="none"/><path d="M10.5 13.6H14.5L12.5 15.8Z" fill="#e8e8e8"/></svg>
<svg style="left:694px;top:422px;" width="11" height="11" viewBox="0 0 11 11"><circle cx="5.5" cy="5.5" r="5" fill="#8e9193"/><path d="M2 3C4 3.5 4 5.5 5.5 6S6 9 7 9.5M6.5 1C6 2.5 8 3 9.5 3.5" stroke="#2b2b2b" stroke-width="1" fill="none"/></svg>
<svg style="left:706px;top:425px;" width="8" height="6" viewBox="0 0 8 6"><path d="M1 1L4 4L7 1" stroke="#8e9193" stroke-width="1.2" fill="none"/></svg>
<svg style="left:1165px;top:91px;" width="14" height="13" viewBox="0 0 14 13"><path d="M7 0.5L13.5 12.5H0.5Z" fill="#e2a91f"/><rect x="6.2" y="4.2" width="1.7" height="4.3" fill="#2b2b2b"/><rect x="6.2" y="9.6" width="1.7" height="1.7" fill="#2b2b2b"/></svg>
<span class="t" style="top:88.5px;line-height:20px;font-size:13px;color:#bbbbbb;left:1181px;">1</span>
<svg style="left:1195px;top:92px;" width="14" height="14" viewBox="0 0 14 14"><path d="M1.5 5.5L5 9L11.5 1.5" stroke="#46a451" stroke-width="2.4" fill="none"/><path d="M1 12.5L3 10.8L5 12.5L7 10.8L9 12.5L11 10.8" stroke="#46a451" stroke-width="0.9" fill="none"/></svg>
<span class="t" style="top:88.5px;line-height:20px;font-size:13px;color:#bbbbbb;left:1211px;">1</span>
<svg style="left:1228px;top:94px;" width="10" height="7" viewBox="0 0 10 7"><path d="M1 6L5 1.5L9 6" stroke="#b4b6b8" stroke-width="1.3" fill="none"/></svg>
<svg style="left:1249px;top:95px;" width="10" height="7" viewBox="0 0 10 7"><path d="M1 1L5 5.5L9 1" stroke="#b4b6b8" stroke-width="1.3" fill="none"/></svg>
<div style="left:1257px;top:112px;width:8px;height:286px;background:rgba(166,166,166,0.38);"></div>
<div style="left:1252px;top:133px;width:14px;height:2px;background:#e2a91f;"></div>
<div style="left:1266px;top:58px;width:1px;height:592px;background:#323232;"></div>
<span class="t" style="top:61.5px;line-height:20px;font-size:13px;color:#bbbbbb;left:1273px;letter-spacing:-0.006px;">Maven</span>
<div style="left:1267px;top:84px;width:632px;height:1px;background:#323232;"></div>
<svg style="left:1852.4px;top:63.400000000000006px;" width="15.2" height="15.2" viewBox="0 0 15.2 15.2"><path d="M5.67 3.26L6.12 1.17L9.08 1.17L9.53 3.26L10.39 3.76L12.43 3.10L13.91 5.67L12.33 7.10L12.33 8.10L13.91 9.53L12.43 12.10L10.39 11.44L9.53 11.94L9.08 14.03L6.12 14.03L5.67 11.94L4.81 11.44L2.77 12.10L1.29 9.53L2.87 8.10L2.87 7.10L1.29 5.67L2.77 3.10L4.81 3.76Z" fill="#afb1b3" stroke="#afb1b3" stroke-width="0.6" stroke-linejoin="round"/><circle cx="7.6" cy="7.6" r="2.18" fill="#3c3f41"/></svg>
<div style="left:1880.5px;top:70px;width:11px;height:2px;background:#afb1b3;"></div>
<div style="left:1267px;top:113px;width:632px;height:1px;background:#323232;"></div>
<svg style="left:1275px;top:93px;" width="14" height="13" viewBox="0 0 14 13"><path d="M2 6.5A5 5 0 0 1 11 3.6M12 6.5A5 5 0 0 1 3 9.4" stroke="#afb1b3" stroke-width="1.7" fill="none"/><path d="M8.5 4.2H12.8V0Z" fill="#afb1b3"/><path d="M5.5 8.8H1.2V13Z" fill="#afb1b3"/></svg>
<svg style="left:1300px;top:92px;" width="18" height="16" viewBox="0 0 18 16"><path d="M0 1H5.5L7 3H13V7.5A5 5 0 0 0 8 12H0Z" fill="#afb1b3"/><path d="M10 11A3 3 0 0 1 15.2 9.2M16 12A3 3 0 0 1 10.8 13.8" stroke="#afb1b3" stroke-width="1.2" fill="none"/><path d="M13.8 9.8H16.6V7Z" fill="#afb1b3"/><path d="M12.2 13.2H9.4V16Z" fill="#afb1b3"/></svg>
<svg style="left:1327px;top:92px;" width="17" height="16" viewBox="0 0 17 16"><path d="M7 0.5V8" stroke="#afb1b3" stroke-width="2"/><path d="M3 5.5L7 10L11 5.5Z" fill="#afb1b3"/><path d="M0.5 12H13.5" stroke="#afb1b3" stroke-width="2"/><path d="M11 13.5H16L13.5 16Z" fill="#afb1b3"/></svg>
<div style="left:1350px;top:90px;width:1px;height:19px;background:#515355;"></div>
<svg style="left:1361px;top:94px;" width="12" height="12" viewBox="0 0 12 12"><path d="M6 0.5V11.5M0.5 6H11.5" stroke="#afb1b3" stroke-width="1.8"/></svg>
<div style="left:1383px;top:90px;width:1px;height:19px;background:#515355;"></div>
<svg style="left:1396px;top:93px;" width="11" height="13" viewBox="0 0 11 13"><path d="M0.5 0.5L10.5 6.5L0.5 12.5Z" fill="#499c54"/></svg>
<span class="t" style="top:89px;line-height:18px;font-size:19px;color:#afb1b3;left:1418px;font-weight:bold;font-style:italic;">m</span>
<svg style="left:1444px;top:93px;" width="16" height="13" viewBox="0 0 16 13"><path d="M0 6.5H5.5M10.5 6.5H16" stroke="#afb1b3" stroke-width="2.4"/><path d="M5 12.5L8 0.5M8.5 12.5L11.5 0.5" stroke="#afb1b3" stroke-width="1.5"/></svg>
<div style="left:1467px;top:88px;width:22px;height:22px;background:#5a5d5f;border-radius:3px;"></div>
<svg style="left:1471px;top:92px;" width="14" height="14" viewBox="0 0 14 14"><circle cx="7" cy="7" r="7" fill="#3e94be"/><path d="M8.3 2L3.8 7.8H6.8L5.7 12L10.2 6.2H7.2Z" fill="#35444d"/></svg>
<svg style="left:1498px;top:92px;" width="14" height="15" viewBox="0 0 14 15"><path d="M0 1.5H13M0 13.5H13" stroke="#afb1b3" stroke-width="2.4"/><path d="M3.5 11V5M9.5 11V5" stroke="#40b6e0" stroke-width="1.2" stroke-dasharray="1.5 1"/><path d="M1.5 6.2L3.5 3.5L5.5 6.2ZM7.5 6.2L9.5 3.5L11.5 6.2Z" fill="#40b6e0"/></svg>
<svg style="left:1523px;top:92px;" width="14" height="16" viewBox="0 0 14 16"><path d="M0.5 8H13.5" stroke="#afb1b3" stroke-width="1.6"/><path d="M7 6L10 2H4ZM7 10L10 14H4Z" fill="#afb1b3"/></svg>
<div style="left:1546px;top:90px;width:1px;height:19px;background:#515355;"></div>
<svg style="left:1555px;top:91px;" width="17" height="17" viewBox="0 0 17 17"><g transform="rotate(45 8 8)"><rect x="6.3" y="6" width="3.4" height="10.5" rx="1.6" fill="#afb1b3"/><circle cx="8" cy="3.6" r="4.3" fill="#afb1b3"/><rect x="6.6" y="-1.5" width="2.8" height="5" fill="#3c3f41"/></g><path d="M11 13H16L13.5 15.6Z" fill="#afb1b3"/></svg>
<div style="left:1267px;top:174px;width:632px;height:20px;background:#0d293e;"></div>
<div style="left:1267px;top:294px;width:632px;height:20px;background:#0d293e;"></div>
<svg style="left:1274px;top:118.5px;" width="8" height="10" viewBox="0 0 8 10"><path d="M2 1L6 5L2 9" stroke="#9da0a2" stroke-width="1.3" fill="none"/></svg>
<svg style="left:1292px;top:116.5px;" width="15" height="12" viewBox="0 0 15 12"><path d="M0 0.5H5.5L7 2.5H14V11.5H0Z" fill="#8a99a3"/></svg>
<svg style="left:1298px;top:123.5px;" width="10" height="8" viewBox="0 0 10 8"><path d="M0 0H10V8H0Z" fill="#3c3f41"/><path d="M1.5 3.5L4 6L8.5 1" stroke="#40b6e0" stroke-width="1.8" fill="none"/></svg>
<span class="t" style="top:113.5px;line-height:20px;font-size:13px;color:#bbbbbb;left:1310px;letter-spacing:-0.045px;">Profiles</span>
<svg style="left:1273px;top:139.5px;" width="10" height="8" viewBox="0 0 10 8"><path d="M1 2L5 6L9 2" stroke="#9da0a2" stroke-width="1.3" fill="none"/></svg>
<svg style="left:1293px;top:135.5px;" width="16" height="17" viewBox="0 0 16 17"><path d="M4 1H9V5H12V9H2V5H4Z" fill="#9aa7b0"/><path d="M2 10H5V14H2Z" fill="#9aa7b0"/></svg>
<span class="t" style="top:142px;line-height:12px;font-size:11.5px;color:#40b6e0;left:1298px;font-weight:bold;font-style:italic;">m</span>
<span class="t" style="top:133.5px;line-height:20px;font-size:13px;color:#bbbbbb;left:1310px;letter-spacing:0.358px;">springboot-debug-test</span>
<svg style="left:1292px;top:159.5px;" width="10" height="8" viewBox="0 0 10 8"><path d="M1 2L5 6L9 2" stroke="#9da0a2" stroke-width="1.3" fill="none"/></svg>
<svg style="left:1310px;top:156.5px;" width="15" height="12" viewBox="0 0 15 12"><path d="M0 0.5H5.5L7 2.5H14V11.5H0Z" fill="#8a99a3"/></svg>
<div style="left:1316px;top:163.5px;width:10px;height:10px;background:#3c3f41;border-radius:5px;"></div>
<svg style="left:1315.8px;top:163.3px;" width="10.4" height="10.4" viewBox="0 0 10.4 10.4"><path d="M3.97 2.44L4.26 1.11L6.14 1.11L6.43 2.44L6.98 2.75L8.27 2.34L9.22 3.97L8.21 4.88L8.21 5.52L9.22 6.43L8.27 8.06L6.98 7.65L6.43 7.96L6.14 9.29L4.26 9.29L3.97 7.96L3.42 7.65L2.13 8.06L1.18 6.43L2.19 5.52L2.19 4.88L1.18 3.97L2.13 2.34L3.42 2.75Z" fill="#40b6e0" stroke="#40b6e0" stroke-width="0.6" stroke-linejoin="round"/><circle cx="5.2" cy="5.2" r="1.39" fill="#3c3f41"/></svg>
<span class="t" style="top:153.5px;line-height:20px;font-size:13px;color:#bbbbbb;left:1328px;letter-spacing:-0.286px;">Lifecycle</span>
<svg style="left:1327.5px;top:176.5px;" width="15.0" height="15.0" viewBox="0 0 15.0 15.0"><path d="M5.60 3.22L6.04 1.17L8.96 1.17L9.40 3.22L10.25 3.71L12.25 3.07L13.72 5.60L12.15 7.01L12.15 7.99L13.72 9.40L12.25 11.93L10.25 11.29L9.40 11.78L8.96 13.83L6.04 13.83L5.60 11.78L4.75 11.29L2.75 11.93L1.28 9.40L2.85 7.99L2.85 7.01L1.28 5.60L2.75 3.07L4.75 3.71Z" fill="#8e9ba5" stroke="#8e9ba5" stroke-width="0.6" stroke-linejoin="round"/><circle cx="7.5" cy="7.5" r="2.15" fill="#0d293e"/></svg>
<span class="t" style="top:173.5px;line-height:20px;font-size:13px;color:#bbbbbb;left:1346px;letter-spacing:-0.216px;">clean</span>
<svg style="left:1327.5px;top:196.5px;" width="15.0" height="15.0" viewBox="0 0 15.0 15.0"><path d="M5.60 3.22L6.04 1.17L8.96 1.17L9.40 3.22L10.25 3.71L12.25 3.07L13.72 5.60L12.15 7.01L12.15 7.99L13.72 9.40L12.25 11.93L10.25 11.29L9.40 11.78L8.96 13.83L6.04 13.83L5.60 11.78L4.75 11.29L2.75 11.93L1.28 9.40L2.85 7.99L2.85 7.01L1.28 5.60L2.75 3.07L4.75 3.71Z" fill="#8e9ba5" stroke="#8e9ba5" stroke-width="0.6" stroke-linejoin="round"/><circle cx="7.5" cy="7.5" r="2.15" fill="#3c3f41"/></svg>
<span class="t" style="top:193.5px;line-height:20px;font-size:13px;color:#bbbbbb;left:1346px;letter-spacing:0.023px;">validate</span>
<svg style="left:1327.5px;top:216.5px;" width="15.0" height="15.0" viewBox="0 0 15.0 15.0"><path d="M5.60 3.22L6.04 1.17L8.96 1.17L9.40 3.22L10.25 3.71L12.25 3.07L13.72 5.60L12.15 7.01L12.15 7.99L13.72 9.40L12.25 11.93L10.25 11.29L9.40 11.78L8.96 13.83L6.04 13.83L5.60 11.78L4.75 11.29L2.75 11.93L1.28 9.40L2.85 7.99L2.85 7.01L1.28 5.60L2.75 3.07L4.75 3.71Z" fill="#8e9ba5" stroke="#8e9ba5" stroke-width="0.6" stroke-linejoin="round"/><circle cx="7.5" cy="7.5" r="2.15" fill="#3c3f41"/></svg>
<span class="t" style="top:213.5px;line-height:20px;font-size:13px;color:#bbbbbb;left:1346px;letter-spacing:0.172px;">compile</span>
<svg style="left:1327.5px;top:236.5px;" width="15.0" height="15.0" viewBox="0 0 15.0 15.0"><path d="M5.60 3.22L6.04 1.17L8.96 1.17L9.40 3.22L10.25 3.71L12.25 3.07L13.72 5.60L12.15 7.01L12.15 7.99L13.72 9.40L12.25 11.93L10.25 11.29L9.40 11.78L8.96 13.83L6.04 13.83L5.60 11.78L4.75 11.29L2.75 11.93L1.28 9.40L2.85 7.99L2.85 7.01L1.28 5.60L2.75 3.07L4.75 3.71Z" fill="#6f7a82" stroke="#6f7a82" stroke-width="0.6" stroke-linejoin="round"/><circle cx="7.5" cy="7.5" r="2.15" fill="#3c3f41"/></svg>
<span class="t" style="top:233.5px;line-height:20px;font-size:13px;color:#7f8183;left:1346px;letter-spacing:0.008px;text-decoration:line-through;">test</span>
<svg style="left:1327.5px;top:256.5px;" width="15.0" height="15.0" viewBox="0 0 15.0 15.0"><path d="M5.60 3.22L6.04 1.17L8.96 1.17L9.40 3.22L10.25 3.71L12.25 3.07L13.72 5.60L12.15 7.01L12.15 7.99L13.72 9.40L12.25 11.93L10.25 11.29L9.40 11.78L8.96 13.83L6.04 13.83L5.60 11.78L4.75 11.29L2.75 11.93L1.28 9.40L2.85 7.99L2.85 7.01L1.28 5.60L2.75 3.07L4.75 3.71Z" fill="#8e9ba5" stroke="#8e9ba5" stroke-width="0.6" stroke-linejoin="round"/><circle cx="7.5" cy="7.5" r="2.15" fill="#3c3f41"/></svg>
<span class="t" style="top:253.5px;line-height:20px;font-size:13px;color:#bbbbbb;left:1346px;letter-spacing:0.121px;">package</span>
<svg style="left:1327.5px;top:276.5px;" width="15.0" height="15.0" viewBox="0 0 15.0 15.0"><path d="M5.60 3.22L6.04 1.17L8.96 1.17L9.40 3.22L10.25 3.71L12.25 3.07L13.72 5.60L12.15 7.01L12.15 7.99L13.72 9.40L12.25 11.93L10.25 11.29L9.40 11.78L8.96 13.83L6.04 13.83L5.60 11.78L4.75 11.29L2.75 11.93L1.28 9.40L2.85 7.99L2.85 7.01L1.28 5.60L2.75 3.07L4.75 3.71Z" fill="#8e9ba5" stroke="#8e9ba5" stroke-width="0.6" stroke-linejoin="round"/><circle cx="7.5" cy="7.5" r="2.15" fill="#3c3f41"/></svg>
<span class="t" style="top:273.5px;line-height:20px;font-size:13px;color:#bbbbbb;left:1346px;letter-spacing:-0.010px;">verify</span>
<svg style="left:1327.5px;top:296.5px;" width="15.0" height="15.0" viewBox="0 0 15.0 15.0"><path d="M5.60 3.22L6.04 1.17L8.96 1.17L9.40 3.22L10.25 3.71L12.25 3.07L13.72 5.60L12.15 7.01L12.15 7.99L13.72 9.40L12.25 11.93L10.25 11.29L9.40 11.78L8.96 13.83L6.04 13.83L5.60 11.78L4.75 11.29L2.75 11.93L1.28 9.40L2.85 7.99L2.85 7.01L1.28 5.60L2.75 3.07L4.75 3.71Z" fill="#8e9ba5" stroke="#8e9ba5" stroke-width="0.6" stroke-linejoin="round"/><circle cx="7.5" cy="7.5" r="2.15" fill="#0d293e"/></svg>
<span class="t" style="top:293.5px;line-height:20px;font-size:13px;color:#bbbbbb;left:1346px;letter-spacing:0.107px;">install</span>
<svg style="left:1327.5px;top:316.5px;" width="15.0" height="15.0" viewBox="0 0 15.0 15.0"><path d="M5.60 3.22L6.04 1.17L8.96 1.17L9.40 3.22L10.25 3.71L12.25 3.07L13.72 5.60L12.15 7.01L12.15 7.99L13.72 9.40L12.25 11.93L10.25 11.29L9.40 11.78L8.96 13.83L6.04 13.83L5.60 11.78L4.75 11.29L2.75 11.93L1.28 9.40L2.85 7.99L2.85 7.01L1.28 5.60L2.75 3.07L4.75 3.71Z" fill="#8e9ba5" stroke="#8e9ba5" stroke-width="0.6" stroke-linejoin="round"/><circle cx="7.5" cy="7.5" r="2.15" fill="#3c3f41"/></svg>
<span class="t" style="top:313.5px;line-height:20px;font-size:13px;color:#bbbbbb;left:1346px;letter-spacing:-0.059px;">site</span>
<svg style="left:1327.5px;top:336.5px;" width="15.0" height="15.0" viewBox="0 0 15.0 15.0"><path d="M5.60 3.22L6.04 1.17L8.96 1.17L9.40 3.22L10.25 3.71L12.25 3.07L13.72 5.60L12.15 7.01L12.15 7.99L13.72 9.40L12.25 11.93L10.25 11.29L9.40 11.78L8.96 13.83L6.04 13.83L5.60 11.78L4.75 11.29L2.75 11.93L1.28 9.40L2.85 7.99L2.85 7.01L1.28 5.60L2.75 3.07L4.75 3.71Z" fill="#8e9ba5" stroke="#8e9ba5" stroke-width="0.6" stroke-linejoin="round"/><circle cx="7.5" cy="7.5" r="2.15" fill="#3c3f41"/></svg>
<span class="t" style="top:333.5px;line-height:20px;font-size:13px;color:#bbbbbb;left:1346px;letter-spacing:0.281px;">deploy</span>
<svg style="left:1293px;top:358.5px;" width="8" height="10" viewBox="0 0 8 10"><path d="M2 1L6 5L2 9" stroke="#9da0a2" stroke-width="1.3" fill="none"/></svg>
<svg style="left:1310px;top:356.5px;" width="15" height="12" viewBox="0 0 15 12"><path d="M0 0.5H5.5L7 2.5H14V11.5H0Z" fill="#8a99a3"/></svg>
<div style="left:1316px;top:363.5px;width:10px;height:10px;background:#3c3f41;border-radius:5px;"></div>
<svg style="left:1315.8px;top:363.3px;" width="10.4" height="10.4" viewBox="0 0 10.4 10.4"><path d="M3.97 2.44L4.26 1.11L6.14 1.11L6.43 2.44L6.98 2.75L8.27 2.34L9.22 3.97L8.21 4.88L8.21 5.52L9.22 6.43L8.27 8.06L6.98 7.65L6.43 7.96L6.14 9.29L4.26 9.29L3.97 7.96L3.42 7.65L2.13 8.06L1.18 6.43L2.19 5.52L2.19 4.88L1.18 3.97L2.13 2.34L3.42 2.75Z" fill="#40b6e0" stroke="#40b6e0" stroke-width="0.6" stroke-linejoin="round"/><circle cx="5.2" cy="5.2" r="1.39" fill="#3c3f41"/></svg>
<span class="t" style="top:353.5px;line-height:20px;font-size:13px;color:#bbbbbb;left:1328px;letter-spacing:-0.234px;">Plugins</span>
<svg style="left:1293px;top:378.5px;" width="8" height="10" viewBox="0 0 8 10"><path d="M2 1L6 5L2 9" stroke="#9da0a2" stroke-width="1.3" fill="none"/></svg>
<svg style="left:1310px;top:376.5px;" width="15" height="12" viewBox="0 0 15 12"><path d="M0 0.5H5.5L7 2.5H14V11.5H0Z" fill="#8a99a3"/></svg>
<svg style="left:1316px;top:381.5px;" width="10" height="9" viewBox="0 0 10 9"><rect x="0" y="0" width="10" height="9" fill="#3c3f41"/><path d="M2 9V3M5 9V1M8 9V4" stroke="#40b6e0" stroke-width="1.8"/><path d="M5 9V1" stroke="#62b543" stroke-width="1.8"/></svg>
<span class="t" style="top:373.5px;line-height:20px;font-size:13px;color:#bbbbbb;left:1328px;letter-spacing:-0.094px;">Dependencies</span>
<svg style="left:1480px;top:35px;" width="18" height="15" viewBox="0 0 18 15"><circle cx="11" cy="4.5" r="3.3" fill="#7d8082"/><path d="M5 13.5C5 9.5 17 9.5 17 13.5Z" fill="#7d8082"/><circle cx="6.5" cy="4.5" r="3.6" fill="#afb1b3"/><path d="M0 14C0 9 13 9 13 14Z" fill="#afb1b3"/></svg>
<svg style="left:1499px;top:41px;" width="8" height="5" viewBox="0 0 8 5"><path d="M0 0H8L4 4.5Z" fill="#afb1b3"/></svg>
<div style="left:1515px;top:33px;width:1px;height:20px;background:#515355;"></div>
<svg style="left:1521px;top:34px;" width="18" height="17" viewBox="0 0 18 17"><path d="M1 6L6.5 1.5L11 4L9.8 5.5L8.5 5L7.5 6L15.5 14.5L13.5 16.5L5.5 8L4.2 9.2Z" fill="#499c54"/></svg>
<div style="left:1549px;top:32px;width:139px;height:22px;border:1px solid #5e6060;box-sizing:border-box;border-radius:3px;"></div>
<svg style="left:1557px;top:36px;" width="15" height="14" viewBox="0 0 15 14"><rect x="0.6" y="3.6" width="10.8" height="9.8" fill="none" stroke="#afb1b3" stroke-width="1.2"/><rect x="2.5" y="7" width="7" height="5" fill="#3d8aa8"/><path d="M3 1.6H13.4V11" stroke="#afb1b3" stroke-width="1.2" fill="none"/><path d="M6.5 5.5H11M9.5 3.5L11.5 5.5L9.5 7.5" stroke="#afb1b3" stroke-width="1" fill="none"/></svg>
<span class="t" style="top:33.5px;line-height:20px;font-size:13px;color:#bbbbbb;left:1578px;letter-spacing:0.314px;">remote debug</span>
<svg style="left:1669px;top:41px;" width="9" height="5" viewBox="0 0 9 5"><path d="M0 0H9L4.5 5Z" fill="#afb1b3"/></svg>
<svg style="left:1701px;top:37px;" width="11" height="13" viewBox="0 0 11 13"><path d="M0.5 0.5L10.5 6.5L0.5 12.5Z" fill="#5e6062"/></svg>
<svg style="left:1725px;top:36px;" width="14" height="15" viewBox="0 0 14 15"><g fill="#499c54"><ellipse cx="7" cy="9" rx="4.2" ry="5.2"/><path d="M4 3.8A3 3 0 0 1 10 3.8Z"/></g><path d="M0.5 6L3.5 7.5M13.5 6L10.5 7.5M0 9.5H3M14 9.5H11M0.8 13.5L3.5 12M13.2 13.5L10.5 12M3.5 0.5L5 2.5M10.5 0.5L9 2.5" stroke="#499c54" stroke-width="1.3" fill="none"/><path d="M4.5 7.5H9.5M4.5 10.5H9.5" stroke="#3c3f41" stroke-width="1"/></svg>
<svg style="left:1750px;top:36px;" width="17" height="16" viewBox="0 0 17 16"><path d="M1 1H9V8C9 11 5 13 5 13S1 11 1 8Z" fill="#5e6062"/><path d="M8 7L15.5 11.5L8 16Z" fill="#5e6062" stroke="#3c3f41" stroke-width="0.8"/></svg>
<svg style="left:1774px;top:36px;" width="17" height="16" viewBox="0 0 17 16"><circle cx="7" cy="7" r="5.7" fill="none" stroke="#5e6062" stroke-width="1.5"/><path d="M7 3.5V7H4.5" stroke="#5e6062" stroke-width="1.3" fill="none"/><path d="M8 7L15.5 11.5L8 16Z" fill="#5e6062" stroke="#3c3f41" stroke-width="0.8"/></svg>
<svg style="left:1797px;top:41px;" width="8" height="5" viewBox="0 0 8 5"><path d="M0 0H8L4 4.5Z" fill="#afb1b3"/></svg>
<div style="left:1816px;top:38px;width:10px;height:10px;background:#5e6062;"></div>
<div style="left:1836px;top:33px;width:1px;height:20px;background:#515355;"></div>
<svg style="left:1846px;top:35px;" width="16" height="16" viewBox="0 0 16 16"><circle cx="6.2" cy="6.2" r="4.7" fill="none" stroke="#afb1b3" stroke-width="1.8"/><path d="M9.8 9.8L14.5 14.5" stroke="#afb1b3" stroke-width="2.2"/></svg>
<svg style="left:1872.4px;top:35.4px;" width="15.2" height="15.2" viewBox="0 0 15.2 15.2"><path d="M5.67 3.26L6.12 1.17L9.08 1.17L9.53 3.26L10.39 3.76L12.43 3.10L13.91 5.67L12.33 7.10L12.33 8.10L13.91 9.53L12.43 12.10L10.39 11.44L9.53 11.94L9.08 14.03L6.12 14.03L5.67 11.94L4.81 11.44L2.77 12.10L1.29 9.53L2.87 8.10L2.87 7.10L1.29 5.67L2.77 3.10L4.81 3.76Z" fill="#afb1b3" stroke="#afb1b3" stroke-width="0.6" stroke-linejoin="round"/><circle cx="7.6" cy="7.6" r="2.18" fill="#3c3f41"/></svg>
<svg style="left:1898px;top:35px;" width="16" height="16" viewBox="0 0 16 16"><defs><linearGradient id="lg1" x1="0" y1="0" x2="1" y2="0.6"><stop offset="0" stop-color="#f3ea3a"/><stop offset="0.45" stop-color="#57d08a"/><stop offset="1" stop-color="#11b5d8"/></linearGradient></defs><path d="M2.2 0.6C7 1 12.5 4 15 7C12.5 11 7 14.5 3 15.2C0.2 11 0.2 5 2.2 0.6Z" fill="url(#lg1)"/><path d="M9 7.2L15 7C12.5 11 7 14.5 3 15.2Z" fill="#1478d4"/><path d="M2.2 0.6C7 1 12.5 4 15 7L9 7.2Z" fill="#19b4d4" opacity="0.55"/></svg>
<div style="left:1900px;top:58px;width:20px;height:954px;background:#3c3f41;"></div>
<div style="left:1899px;top:58px;width:1px;height:954px;background:#323232;"></div>
<svg style="left:1903px;top:67px;" width="14" height="14" viewBox="0 0 14 14"><ellipse cx="7" cy="2.8" rx="6" ry="2.3" fill="#afb1b3"/><path d="M1 5.2C1 7.8 13 7.8 13 5.2V7.2C13 9.8 1 9.8 1 7.2ZM1 8.6C1 11.2 13 11.2 13 8.6V10.8C13 13.6 1 13.6 1 10.8Z" fill="#afb1b3"/></svg>
<span class="t" style="top:-7px;line-height:14px;font-size:12.5px;color:#bbbbbb;left:0px;letter-spacing:-0.564px;left:1915px;top:85px;transform-origin:0 0;transform:rotate(90deg);">Database</span>
<div style="left:1900px;top:143px;width:20px;height:72px;background:#2d2f30;"></div>
<span class="t" style="top:152.5px;line-height:14px;font-size:16px;color:#a8a8a8;left:1903.5px;font-weight:bold;font-style:italic;">m</span>
<span class="t" style="top:-7px;line-height:14px;font-size:12.5px;color:#eeeeee;left:0px;letter-spacing:-0.506px;left:1915px;top:171px;transform-origin:0 0;transform:rotate(90deg);">Maven</span>
<div style="left:1531px;top:301px;width:400px;height:261px;background:#3c3f41;border:1px solid #555759;box-sizing:border-box;box-shadow:0 3px 10px rgba(0,0,0,0.35);"></div>
<svg style="left:1539px;top:305.8px;" width="11" height="13" viewBox="0 0 11 13"><path d="M0.5 0.5L10.5 6.5L0.5 12.5Z" fill="#499c54"/></svg>
<svg style="left:1539px;top:326.8px;" width="11" height="13" viewBox="0 0 11 13"><path d="M0.5 0.5L10.5 6.5L0.5 12.5Z" fill="#499c54"/></svg>
<span class="t" style="top:302.5px;line-height:20px;font-size:13px;color:#bbbbbb;left:1556px;letter-spacing:-0.134px;"><u>R</u>un Maven Build</span>
<span class="t" style="top:323.5px;line-height:20px;font-size:13px;color:#bbbbbb;left:1556px;letter-spacing:0.168px;">R<u>u</u>n 'springboot-debug-tes...'</span>
<span class="t" style="top:323.5px;line-height:20px;font-size:13px;color:#bbbbbb;left:1824px;letter-spacing:-0.059px;">Ctrl+Shift+F10</span>
<svg style="left:1537px;top:346.8px;" width="14" height="15" viewBox="0 0 14 15"><g fill="#499c54"><ellipse cx="7" cy="9" rx="4.2" ry="5.2"/><path d="M4 3.8A3 3 0 0 1 10 3.8Z"/></g><path d="M0.5 6L3.5 7.5M13.5 6L10.5 7.5M0 9.5H3M14 9.5H11M0.8 13.5L3.5 12M13.2 13.5L10.5 12M3.5 0.5L5 2.5M10.5 0.5L9 2.5" stroke="#499c54" stroke-width="1.3" fill="none"/><path d="M4.5 7.5H9.5M4.5 10.5H9.5" stroke="#3c3f41" stroke-width="1"/></svg>
<span class="t" style="top:344.5px;line-height:20px;font-size:13px;color:#bbbbbb;left:1556px;letter-spacing:0.207px;"><u>D</u>ebug 'springboot-debug-tes...'</span>
<svg style="left:1536px;top:367.3px;" width="17" height="16" viewBox="0 0 17 16"><circle cx="7" cy="7" r="5.7" fill="none" stroke="#afb1b3" stroke-width="1.5"/><path d="M7 3.5V7H4.5" stroke="#afb1b3" stroke-width="1.3" fill="none"/><path d="M8 7L15.5 11.5L8 16Z" fill="#499c54" stroke="#3c3f41" stroke-width="0.8"/></svg>
<svg style="left:1536px;top:388.3px;" width="17" height="16" viewBox="0 0 17 16"><circle cx="7" cy="7" r="5.7" fill="none" stroke="#afb1b3" stroke-width="1.5"/><path d="M7 3.5V7H4.5" stroke="#afb1b3" stroke-width="1.3" fill="none"/><path d="M8 7L15.5 11.5L8 16Z" fill="#c75450" stroke="#3c3f41" stroke-width="0.8"/></svg>
<span class="t" style="top:365.5px;line-height:20px;font-size:13px;color:#bbbbbb;left:1556px;letter-spacing:0.114px;">Run 'springboot-debug-tes...' with 'Windows Async Profiler'</span>
<span class="t" style="top:386.5px;line-height:20px;font-size:13px;color:#bbbbbb;left:1556px;letter-spacing:0.081px;">Run 'springboot-debug-tes...' with 'Java Flight Recorder'</span>
<span class="t" style="top:407.5px;line-height:20px;font-size:13px;color:#bbbbbb;left:1556px;letter-spacing:0.054px;">Modify Run Configuration...</span>
<div style="left:1532px;top:429px;width:388px;height:1px;background:#515355;"></div>
<span class="t" style="top:432.1px;line-height:20px;font-size:13px;color:#bbbbbb;left:1556px;letter-spacing:-0.070px;">Execute Before Build</span>
<span class="t" style="top:453.1px;line-height:20px;font-size:13px;color:#bbbbbb;left:1556px;letter-spacing:-0.044px;">Execute After Build</span>
<span class="t" style="top:474.1px;line-height:20px;font-size:13px;color:#bbbbbb;left:1556px;letter-spacing:-0.072px;">Execute Before Rebuild</span>
<span class="t" style="top:495.1px;line-height:20px;font-size:13px;color:#bbbbbb;left:1556px;letter-spacing:-0.049px;">Execute After Rebuild</span>
<span class="t" style="top:516.1px;line-height:20px;font-size:13px;color:#777777;left:1556px;letter-spacing:-0.115px;">Execute Before Run/Debug...</span>
<div style="left:1532px;top:537px;width:388px;height:1px;background:#515355;"></div>
<span class="t" style="top:540.1px;line-height:20px;font-size:13px;color:#777777;left:1556px;letter-spacing:-0.161px;">Assign Shortcut...</span>
<div style="left:22px;top:649px;width:1878px;height:1px;background:#323232;"></div>
<span class="t" style="top:653.5px;line-height:20px;font-size:13px;color:#bbbbbb;left:28px;letter-spacing:-0.617px;">Run:</span>
<span class="t" style="top:653.7px;line-height:18px;font-size:19px;color:#3a7f9f;left:72.5px;font-weight:bold;font-style:italic;transform-origin:0 50%;transform:scaleX(0.88);">m</span>
<span class="t" style="top:653.5px;line-height:20px;font-size:13px;color:#bbbbbb;left:92px;letter-spacing:0.183px;">springboot-debug-test [clean,install]</span>
<svg style="left:311px;top:660px;" width="8" height="8" viewBox="0 0 8 8"><path d="M0.8 0.8L7.2 7.2M7.2 0.8L0.8 7.2" stroke="#6e7173" stroke-width="1" fill="none"/></svg>
<div style="left:22px;top:677px;width:1878px;height:1px;background:#323232;"></div>
<div style="left:60px;top:674px;width:270px;height:3px;background:#747a80;"></div>
<svg style="left:1851.4px;top:655.4px;" width="15.2" height="15.2" viewBox="0 0 15.2 15.2"><path d="M5.67 3.26L6.12 1.17L9.08 1.17L9.53 3.26L10.39 3.76L12.43 3.10L13.91 5.67L12.33 7.10L12.33 8.10L13.91 9.53L12.43 12.10L10.39 11.44L9.53 11.94L9.08 14.03L6.12 14.03L5.67 11.94L4.81 11.44L2.77 12.10L1.29 9.53L2.87 8.10L2.87 7.10L1.29 5.67L2.77 3.10L4.81 3.76Z" fill="#afb1b3" stroke="#afb1b3" stroke-width="0.6" stroke-linejoin="round"/><circle cx="7.6" cy="7.6" r="2.18" fill="#3c3f41"/></svg>
<div style="left:1880.5px;top:662px;width:11px;height:2px;background:#afb1b3;"></div>
<div style="left:50px;top:678px;width:1px;height:312px;background:#323232;"></div>
<svg style="left:32px;top:685px;" width="10" height="12" viewBox="0 0 10 12"><path d="M0.3 0.3L9.7 6L0.3 11.7Z" fill="#499c54"/></svg>
<svg style="left:28px;top:709px;" width="17" height="15" viewBox="0 0 17 15"><path d="M0.5 5L7 9.5L0.5 14Z" fill="#5e6062"/><circle cx="10.5" cy="5.5" r="5.3" fill="#5e6062"/></svg>
<span class="t" style="top:711px;line-height:10px;font-size:9px;color:#3c3f41;left:36.2px;font-weight:bold;">!</span>
<svg style="left:28px;top:734px;" width="16" height="16" viewBox="0 0 16 16"><g transform="rotate(45 8 8)"><rect x="6.3" y="6" width="3.4" height="10.5" rx="1.6" fill="#afb1b3"/><circle cx="8" cy="3.6" r="4.3" fill="#afb1b3"/><rect x="6.6" y="-1.5" width="2.8" height="5" fill="#3c3f41"/></g></svg>
<div style="left:26px;top:759px;width:20px;height:1px;background:#515355;"></div>
<div style="left:31px;top:771px;width:10px;height:10px;background:#5e6062;"></div>
<svg style="left:28px;top:796px;" width="18" height="16" viewBox="0 0 18 16"><path d="M0.3 6.5C3 0.8 12 0.8 14.7 6.5C12 12.2 3 12.2 0.3 6.5Z" fill="#afb1b3"/><circle cx="7.5" cy="6.5" r="3.6" fill="#3c3f41"/><circle cx="7.5" cy="6.5" r="2" fill="#afb1b3"/><path d="M12 12.5H17L14.5 15.2Z" fill="#afb1b3"/></svg>
<svg style="left:29px;top:822px;" width="14" height="12" viewBox="0 0 14 12"><path d="M0 2.5H3.5L4.5 0.5H9.5L10.5 2.5H14V12H0Z" fill="#5e6062"/><circle cx="7" cy="7" r="2.8" fill="#3c3f41"/><circle cx="7" cy="7" r="1.5" fill="#5e6062"/></svg>
<svg style="left:29px;top:847px;" width="15" height="16" viewBox="0 0 15 16"><g fill="#5e6062"><ellipse cx="7" cy="9" rx="4.2" ry="5.2"/><path d="M4 3.8A3 3 0 0 1 10 3.8Z"/></g><path d="M0.5 6L3.5 7.5M13.5 6L10.5 7.5M0 9.5H3M14 9.5H11M0.8 13.5L3.5 12M13.2 13.5L10.5 12M3.5 0.5L5 2.5M10.5 0.5L9 2.5" stroke="#5e6062" stroke-width="1.3" fill="none"/><circle cx="10.5" cy="11.5" r="3.6" fill="#3c3f41"/><circle cx="10.5" cy="11.5" r="2" fill="none" stroke="#5e6062" stroke-width="1.6" stroke-dasharray="1.2 0.8"/></svg>
<svg style="left:29px;top:873px;" width="14" height="14" viewBox="0 0 14 14"><path d="M4 1V0.9H13.1V13.1H4V13" stroke="#5e6062" stroke-width="1.9" fill="none"/><path d="M0 7H8" stroke="#5e6062" stroke-width="1.9"/><path d="M5.5 3.8L9 7L5.5 10.2" stroke="#5e6062" stroke-width="1.9" fill="none"/></svg>
<div style="left:26px;top:896px;width:20px;height:1px;background:#515355;"></div>
<svg style="left:30px;top:908px;" width="13" height="10" viewBox="0 0 13 10"><rect x="0" y="0" width="7" height="4.2" fill="#afb1b3"/><rect x="8" y="0" width="4" height="4.2" fill="#afb1b3"/><rect x="0" y="5.4" width="12" height="4.4" fill="#afb1b3"/></svg>
<div style="left:26px;top:929px;width:20px;height:1px;background:#515355;"></div>
<svg style="left:28px;top:938px;" width="16" height="16" viewBox="0 0 16 16"><path d="M9 0.8L15.2 7L13.8 7.6L11.6 7.2L9.2 9.8C9.6 11.4 9.2 12.8 8.2 13.8L2.2 7.8C3.2 6.8 4.6 6.4 6.2 6.8L8.8 4.4L8.4 2.2Z" fill="#afb1b3"/><path d="M5.2 10.8L0.8 15.2" stroke="#afb1b3" stroke-width="1.5"/></svg>
<svg style="left:77px;top:681px;" width="13" height="12" viewBox="0 0 13 12"><path d="M1 6.5L4.8 10L12 1.8" stroke="#499c54" stroke-width="2.6" fill="none"/></svg>
<span class="t" style="top:676.5px;line-height:20px;font-size:13px;color:#bbbbbb;left:94px;font-weight:bold;letter-spacing:0.009px;">springboot-debug-test [clean,install]:</span>
<span class="t" style="top:677px;line-height:20px;font-size:13px;color:#8a8a8a;left:328px;letter-spacing:0.007px;">At 2025/7/31 14:16</span>
<span class="t" style="top:676.5px;line-height:20px;font-size:11px;color:#7d7d7d;right:1263px;">14 sec, 810 ms</span>
<div style="left:660px;top:678px;width:2px;height:312px;background:#323232;"></div>
<div style="left:662px;top:678px;width:1209px;height:312px;background:#2b2b2b;"></div>
<div style="left:662px;top:678px;width:1209px;height:312px;overflow:hidden;color:#bbbbbb;font-family:'DejaVu Sans Mono','Noto Sans CJK SC',monospace;font-size:13.29px;"><span class="t" style="left:12px;top:-10px;line-height:22px;">[INFO] Replacing main artifact with repackaged archive</span><span class="t" style="left:12px;top:12px;line-height:22px;">[INFO]</span><span class="t" style="left:12px;top:34px;line-height:22px;">[INFO] --- maven-install-plugin:2.5.2:install (default-install) @ springboot-debug-test ---</span><span class="t" style="left:12px;top:56px;line-height:22px;">[INFO] Installing <span style="color:#287bde;text-decoration:underline;">D:\Work\springboot-debug-test\target\springboot-debug-test-1.0.0.jar</span> to D:\Maven\apache-maven-3.8.2\MavenStore\com\cpolar\springboot-debug-test\1.0.0\springboot-debug-test-1.0.0.jar</span><span class="t" style="left:12px;top:78px;line-height:22px;">[INFO] Installing <span style="color:#287bde;text-decoration:underline;">D:\Work\springboot-debug-test\pom.xml</span> to D:\Maven\apache-maven-3.8.2\MavenStore\com\cpolar\springboot-debug-test\1.0.0\springboot-debug-test-1.0.0.pom</span><span class="t" style="left:12px;top:100px;line-height:22px;">[INFO] ------------------------------------------------------------------------</span><span class="t" style="left:12px;top:122px;line-height:22px;">[INFO] BUILD SUCCESS</span><span class="t" style="left:12px;top:144px;line-height:22px;">[INFO] ------------------------------------------------------------------------</span><span class="t" style="left:12px;top:166px;line-height:22px;">[INFO] Total time:  13.702 s</span><span class="t" style="left:12px;top:188px;line-height:22px;">[INFO] Finished at: 2025-07-31T14:16:22+08:00</span><span class="t" style="left:12px;top:210px;line-height:22px;">[INFO] ------------------------------------------------------------------------</span><span class="t" style="left:12px;top:254px;line-height:22px;">Process finished with exit code 0</span></div>
<div style="left:675px;top:980px;width:254px;height:8px;background:rgba(166,166,166,0.38);"></div>
<div style="left:1862px;top:900px;width:7px;height:86px;background:rgba(166,166,166,0.38);"></div>
<div style="left:1871px;top:678px;width:28px;height:312px;background:#3c3f41;"></div>
<svg style="left:1878px;top:685px;" width="14" height="13" viewBox="0 0 14 13"><path d="M0.5 1.5H13.5M0.5 6H10A2.3 2.3 0 0 1 10 10.6H7.5M0.5 10.5H4" stroke="#afb1b3" stroke-width="1.5" fill="none"/><path d="M9 8L6 10.6L9 13.2Z" fill="#afb1b3"/></svg>
<div style="left:1874px;top:706px;width:22px;height:22px;background:#5a5d5f;border-radius:3px;"></div>
<svg style="left:1878px;top:710px;" width="14" height="14" viewBox="0 0 14 14"><path d="M0.5 2H5.5M0.5 6H5.5M0.5 12.5H13.5" stroke="#afb1b3" stroke-width="1.5"/><path d="M10 0.5V6" stroke="#afb1b3" stroke-width="1.6"/><path d="M6.8 5L10 9.5L13.2 5Z" fill="#afb1b3"/></svg>
<div style="left:0px;top:989px;width:1920px;height:1px;background:#323232;"></div>
<div style="left:0px;top:990px;width:1920px;height:22px;background:#3c3f41;"></div>
<div style="left:22px;top:990px;width:55px;height:21px;background:#2d2f30;"></div>
<div style="left:0px;top:1011px;width:1920px;height:1px;background:#484a4c;"></div>
<svg style="left:32px;top:997px;" width="8" height="10" viewBox="0 0 8 10"><path d="M0 0L8 5L0 10Z" fill="#d0d0d0"/></svg>
<span class="t" style="top:991.5px;line-height:20px;font-size:12.5px;color:#e6e6e6;left:47px;letter-spacing:-0.646px;">Run</span>
<svg style="left:89px;top:997px;" width="11" height="9" viewBox="0 0 11 9"><path d="M0 1H2M0 4.5H2M0 8H2M3.5 1H11M3.5 4.5H11M3.5 8H11" stroke="#afb1b3" stroke-width="1.6"/></svg>
<span class="t" style="top:991.5px;line-height:20px;font-size:12.5px;color:#bbbbbb;left:104px;letter-spacing:-0.973px;">TODO</span>
<svg style="left:157px;top:996px;" width="11" height="11" viewBox="0 0 11 11"><circle cx="5.5" cy="5.5" r="5.5" fill="#afb1b3"/><rect x="4.7" y="2.2" width="1.6" height="4.2" fill="#3c3f41"/><rect x="4.7" y="7.4" width="1.6" height="1.6" fill="#3c3f41"/></svg>
<span class="t" style="top:991.5px;line-height:20px;font-size:12.5px;color:#bbbbbb;left:173px;letter-spacing:-0.475px;">Problems</span>
<svg style="left:243px;top:995px;" width="12" height="13" viewBox="0 0 12 13"><g fill="#afb1b3"><ellipse cx="6" cy="7.8" rx="3.8" ry="4.6"/><path d="M3.3 3.4A2.7 2.7 0 0 1 8.7 3.4Z"/></g><path d="M0.5 5L3 6.5M11.5 5L9 6.5M0 8.5H2.5M12 8.5H9.5M0.8 12L3 10.5M11.2 12L9 10.5M3 0.5L4.3 2M9 0.5L7.7 2" stroke="#afb1b3" stroke-width="1.1" fill="none"/></svg>
<span class="t" style="top:991.5px;line-height:20px;font-size:12.5px;color:#bbbbbb;left:259px;letter-spacing:-0.369px;">Debug</span>
<svg style="left:314px;top:995px;" width="15" height="14" viewBox="0 0 15 14"><circle cx="6" cy="6" r="4.8" fill="none" stroke="#afb1b3" stroke-width="1.4"/><path d="M6 3V6H4" stroke="#afb1b3" stroke-width="1.2" fill="none"/><path d="M7.5 6.5L13.5 10L7.5 13.5Z" fill="#afb1b3" stroke="#3c3f41" stroke-width="0.8"/></svg>
<span class="t" style="top:991.5px;line-height:20px;font-size:12.5px;color:#bbbbbb;left:332px;letter-spacing:-0.199px;">Profiler</span>
<svg style="left:391px;top:996px;" width="12" height="11" viewBox="0 0 12 11"><rect x="0" y="0" width="12" height="11" fill="#afb1b3"/><path d="M2 3L5 5.5L2 8M6 8.5H10" stroke="#3c3f41" stroke-width="1.2" fill="none"/></svg>
<span class="t" style="top:991.5px;line-height:20px;font-size:12.5px;color:#bbbbbb;left:407px;letter-spacing:-0.281px;">Terminal</span>
<svg style="left:472px;top:995px;" width="13" height="13" viewBox="0 0 13 13"><path d="M0.5 4.5L4.5 1L8 3L7 4.2L6 3.8L5.3 4.5L11.5 11L10 12.5L3.8 6L2.8 7Z" fill="#afb1b3"/></svg>
<span class="t" style="top:991.5px;line-height:20px;font-size:12.5px;color:#bbbbbb;left:489px;letter-spacing:-0.159px;">Build</span>
<svg style="left:536px;top:995px;" width="14" height="13" viewBox="0 0 14 13"><circle cx="7" cy="2.6" r="2.2" fill="#afb1b3"/><circle cx="2.6" cy="10.4" r="2.2" fill="#afb1b3"/><circle cx="11.4" cy="10.4" r="2.2" fill="#afb1b3"/><path d="M7 2.6L2.6 10.4M7 2.6L11.4 10.4" stroke="#afb1b3" stroke-width="1.3"/></svg>
<span class="t" style="top:991.5px;line-height:20px;font-size:12.5px;color:#bbbbbb;left:553px;letter-spacing:-0.290px;">Endpoints</span>
<svg style="left:630px;top:995px;" width="14" height="13" viewBox="0 0 14 13"><path d="M7 0.5L13.5 3.5L7 6.5L0.5 3.5Z" fill="#afb1b3"/><path d="M1 6.2L7 9L13 6.2M1 9.2L7 12L13 9.2" stroke="#afb1b3" stroke-width="1.4" fill="none"/></svg>
<span class="t" style="top:991.5px;line-height:20px;font-size:12.5px;color:#bbbbbb;left:647px;letter-spacing:-0.493px;">Dependencies</span>
<svg style="left:743px;top:996px;" width="13" height="11" viewBox="0 0 13 11"><path d="M0.5 7C0.5 3 5 1.5 12.5 0.8C12.5 6 10 10.5 4.5 10C3 10 2 9.5 1.5 9L0.8 10.2Z" fill="#afb1b3"/></svg>
<span class="t" style="top:991.5px;line-height:20px;font-size:12.5px;color:#bbbbbb;left:760px;letter-spacing:-0.357px;">Spring</span>
<svg style="left:1820px;top:996px;" width="12" height="11" viewBox="0 0 12 11"><path d="M0.5 0.5H11.5V8H5L2.5 10.5V8H0.5Z" fill="none" stroke="#8a8c8e" stroke-width="1"/></svg>
<span class="t" style="top:992px;line-height:20px;font-size:12.5px;color:#bbbbbb;left:1837.5px;letter-spacing:-0.700px;">Event Log</span>
<svg style="left:5px;top:1015px;" width="13" height="13" viewBox="0 0 13 13"><rect x="3.5" y="0.5" width="9" height="9" fill="none" stroke="#afb1b3" stroke-width="1"/><path d="M0.5 3.5V12.5H9.5" stroke="#afb1b3" stroke-width="1" fill="none"/></svg>
<span class="t" style="top:1012px;line-height:20px;font-size:12.5px;color:#bbbbbb;left:1712px;letter-spacing:-0.086px;">34:8</span>
<span class="t" style="top:1012px;line-height:20px;font-size:12.5px;color:#bbbbbb;left:1748px;letter-spacing:-0.914px;">CRLF</span>
<span class="t" style="top:1012px;line-height:20px;font-size:12.5px;color:#bbbbbb;left:1788px;letter-spacing:-0.284px;">UTF-8</span>
<span class="t" style="top:1012px;line-height:20px;font-size:12.5px;color:#bbbbbb;left:1833px;letter-spacing:0.246px;">4 spaces</span>
<svg style="left:1895px;top:1015px;" width="13" height="13" viewBox="0 0 13 13"><rect x="3" y="6" width="9" height="6.5" fill="#afb1b3"/><path d="M1.5 6V3.5A2.2 2.2 0 0 1 6 3.5V6" stroke="#afb1b3" stroke-width="1.3" fill="none"/></svg>
<div style="left:1459px;top:80px;width:39px;height:35px;border:3px solid #ed1c24;box-sizing:border-box;"></div>
<div style="left:1318px;top:171px;width:72px;height:25px;border:3px solid #ed1c24;box-sizing:border-box;"></div>
<div style="left:1313px;top:291px;width:78px;height:25px;border:3px solid #ed1c24;box-sizing:border-box;"></div>
<div style="left:1520px;top:298px;width:146px;height:25px;border:3px solid #ed1c24;box-sizing:border-box;"></div>
<div style="left:69px;top:441px;width:225px;height:27px;border:3px solid #ed1c24;box-sizing:border-box;"></div>
<div style="left:721px;top:790px;width:121px;height:38px;border:3px solid #ed1c24;box-sizing:border-box;"></div>
<svg style="left:0;top:0;pointer-events:none;" width="1920" height="1032" viewBox="0 0 1920 1032"><path d="M1592.1 140.3L1519.3 114.1L1526.9 109.8L1501.8 113.1L1520.7 129.9L1516.8 122.1L1591.9 141.1Z" fill="#ed1c24"/></svg>
<span class="t" style="top:126px;line-height:24px;font-size:17.8px;color:#ed1c24;left:1601px;letter-spacing:0.201px;">1.点击禁用测试（提升打包效率）</span>
<svg style="left:0;top:0;pointer-events:none;" width="1920" height="1032" viewBox="0 0 1920 1032"><path d="M1180.9 232.1L1290.6 194.9L1287.2 202.9L1305.0 185.0L1279.8 183.3L1287.6 187.1L1180.7 231.3Z" fill="#ed1c24"/></svg>
<svg style="left:0;top:0;pointer-events:none;" width="1920" height="1032" viewBox="0 0 1920 1032"><path d="M1180.7 257.1L1280.9 297.4L1273.1 301.3L1298.3 299.2L1280.2 281.5L1283.7 289.5L1180.9 256.3Z" fill="#ed1c24"/></svg>
<span class="t" style="top:230.5px;line-height:24px;font-size:17.8px;color:#ed1c24;left:1041px;letter-spacing:0.532px;">2.ctrl+单机左键 多选</span>
<svg style="left:0;top:0;pointer-events:none;" width="1920" height="1032" viewBox="0 0 1920 1032"><path d="M1454.1 467.3L1516.1 342.8L1519.3 350.9L1519.5 325.6L1500.3 342.0L1508.5 339.2L1453.3 466.9Z" fill="#ed1c24"/></svg>
<span class="t" style="top:471px;line-height:24px;font-size:17.8px;color:#ed1c24;left:1327px;letter-spacing:0.102px;">3.右键选择第一个运行</span>
<span class="t" style="top:494px;line-height:24px;font-size:17.8px;color:#ed1c24;left:1327px;letter-spacing:0.438px;">maven构建</span>
<svg style="left:0;top:0;pointer-events:none;" width="1920" height="1032" viewBox="0 0 1920 1032"><path d="M1059.4 841.3L896.3 804.9L903.4 799.9L878.8 805.7L899.3 820.5L894.7 813.1L1059.2 842.1Z" fill="#ed1c24"/></svg>
<span class="t" style="top:835px;line-height:24px;font-size:17.8px;color:#ed1c24;left:1076px;letter-spacing:0.156px;">4. 构建成功</span>
<svg style="left:0;top:0;pointer-events:none;" width="1920" height="1032" viewBox="0 0 1920 1032"><path d="M334.8 542.2L287.3 484.4L296.0 484.6L272.8 474.7L280.5 498.8L281.1 490.1L334.2 542.8Z" fill="#ed1c24"/></svg>
<span class="t" style="top:547px;line-height:24px;font-size:17.8px;color:#ed1c24;left:209px;letter-spacing:0.379px;">5.构建成功的jar文件在target目录下</span>
<div style="left:1712px;top:921px;width:177px;height:26px;background:#ffffff;border:1px solid #b8c4e8;box-sizing:border-box;border-radius:3px;"></div>
<svg style="left:1685px;top:915px;" width="36" height="34" viewBox="0 0 36 34"><g transform="rotate(-9 18 17)"><rect x="3" y="3.5" width="29" height="27" rx="5" fill="#f4511e"/><path d="M25.5 10.5C22 7.5 11 7.5 10.5 12.5C10 18 26 15 25.5 21C25 26.5 13 26 9 22.5" stroke="#ffffff" stroke-width="4.2" fill="none" stroke-linecap="round"/></g></svg>
<span class="t" style="top:925px;line-height:18px;font-size:16px;color:#1a62d6;left:1724px;font-weight:bold;">英</span>
<span class="t" style="top:923px;line-height:18px;font-size:17px;color:#1a62d6;left:1750px;font-weight:bold;letter-spacing:1px;">•,</span>
<svg style="left:1773px;top:925px;" width="14" height="18" viewBox="0 0 14 18"><rect x="4.2" y="0.5" width="5.6" height="10" rx="2.8" fill="#1a62d6"/><path d="M1.5 8A5.5 5.5 0 0 0 12.5 8" stroke="#1a62d6" stroke-width="1.7" fill="none"/><path d="M7 13.5V16.5M4.5 16.7H9.5" stroke="#1a62d6" stroke-width="1.7"/></svg>
<svg style="left:1797px;top:928px;" width="16" height="12" viewBox="0 0 16 12"><rect x="0.9" y="0.9" width="14.2" height="10.2" rx="1.8" fill="none" stroke="#1a62d6" stroke-width="1.8"/><path d="M3.5 4H12.5M3.5 6.2H12.5" stroke="#1a62d6" stroke-width="1.4" stroke-dasharray="1.6 1"/><path d="M4.5 8.6H11.5" stroke="#1a62d6" stroke-width="1.4"/></svg>
<svg style="left:1820px;top:923px;" width="20" height="20" viewBox="0 0 20 20"><defs><linearGradient id="sg" x1="0" y1="0" x2="1" y2="1"><stop offset="0" stop-color="#ff6a6a"/><stop offset="0.5" stop-color="#b45cf0"/><stop offset="1" stop-color="#5b7bff"/></linearGradient></defs><path d="M5 4.5L1 7.5L3 10.5L4.5 9.7V17.5H13.5V9.7L15 10.5L17 7.5L13 4.5C11.5 6.5 6.5 6.5 5 4.5Z" fill="url(#sg)"/><circle cx="16" cy="3.5" r="2.5" fill="#f4422e"/></svg>
<svg style="left:1846px;top:928px;" width="14" height="13" viewBox="0 0 14 13"><rect x="0.5" y="0" width="5.6" height="5.4" rx="1.4" fill="#1a62d6"/><rect x="7.6" y="0" width="5.6" height="5.4" rx="1.4" fill="#1a62d6"/><rect x="0.5" y="7" width="5.6" height="5.4" rx="1.4" fill="#1a62d6"/><rect x="7.6" y="7" width="5.6" height="5.4" rx="1.4" fill="#1a62d6"/></svg>
<svg style="left:1865px;top:922px;" width="24" height="24" viewBox="0 0 24 24"><circle cx="11" cy="13" r="9.5" fill="#fbf3ef"/><path d="M3.5 8L5 3L9 6ZM18.5 8L17 3L13 6Z" fill="#fbf3ef"/><path d="M3.5 10.5C6 8 14 8 18.5 9.5L17 13.5C13 12 8 12.5 5 14Z" fill="#e8622a"/><circle cx="8" cy="11.3" r="1" fill="#222"/><circle cx="14" cy="11" r="1" fill="#222"/><path d="M10 16.5Q11.5 18 13 16.5" stroke="#333" stroke-width="0.8" fill="none"/><path d="M20.5 3L21.4 5.6L24 6.5L21.4 7.4L20.5 10L19.6 7.4L17 6.5L19.6 5.6Z" fill="#ffd83b"/></svg>
<span class="t" style="top:979.5px;line-height:40px;font-size:34px;color:rgba(255,255,255,0.72);left:1588px;letter-spacing:-0.219px;">CSDN @</span>
<span class="t" style="top:980.5px;line-height:40px;font-size:37px;color:rgba(255,255,255,0.72);left:1728px;letter-spacing:0.600px;">热爱技术。</span>
</div></body></html>
